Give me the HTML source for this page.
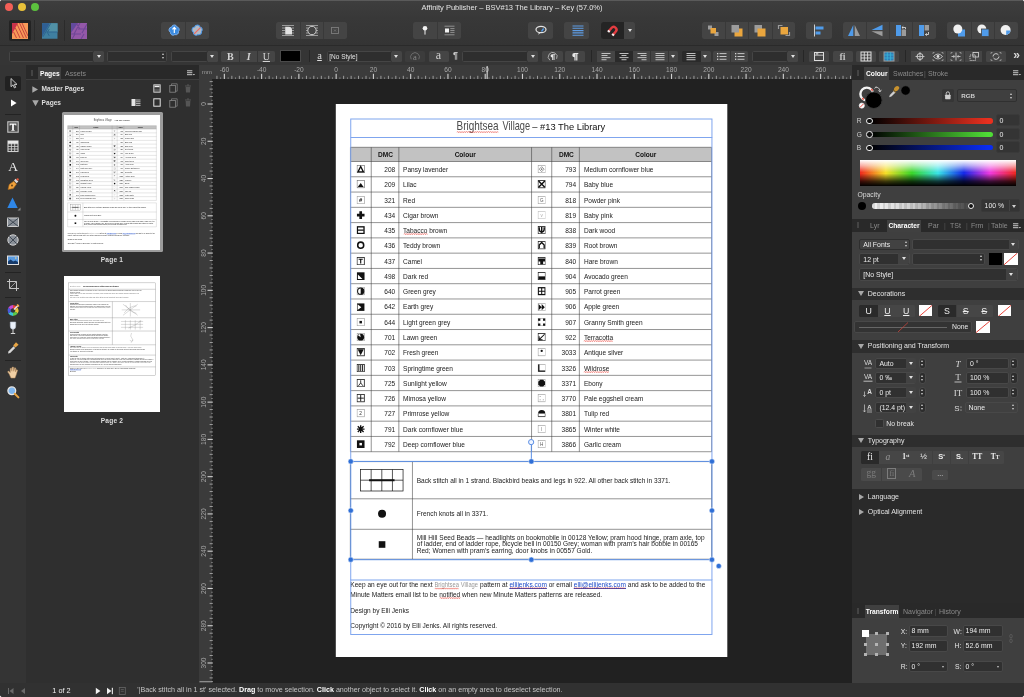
<!DOCTYPE html>
<html lang="en"><head><meta charset="utf-8"><title>Affinity Publisher - BSV#13 The Library - Key</title>
<style>
*{box-sizing:border-box;margin:0;padding:0}
html,body{width:1024px;height:697px;overflow:hidden;background:#fff}
body{font-family:"Liberation Sans",sans-serif;color:#ddd;font-size:7px;position:relative}
.abs{position:absolute}
#app{position:absolute;left:0;top:0;width:1024px;height:697px;overflow:hidden;background:#212121;border-radius:3px;will-change:transform}
#title{position:absolute;left:0;top:0;width:1024px;height:45px;background:linear-gradient(#3e3e3e,#383838 40%,#343434)}
#title .tl{position:absolute;top:3px;width:8px;height:8px;border-radius:50%}
#ttext{position:absolute;left:0;width:1024px;top:3.2px;text-align:center;font-size:7.5px;color:#e4e4e4;letter-spacing:0px}
.grp{position:absolute;top:22px;height:17px;background:#444;border-radius:2.5px;overflow:hidden}
.grp i{position:absolute;top:0;width:1px;height:17px;background:#393939}
.grp svg{position:absolute;top:0}
#ctx{position:absolute;left:0;top:45px;width:1024px;height:20px;background:#353535;border-top:1px solid #2a2a2a}
.fld{position:absolute;top:50.5px;height:11px;background:#2e2e2e;border:0.6px solid #454545;border-radius:1.5px;color:#e2e2e2;font-size:6.5px;line-height:10px;padding-left:3px;white-space:nowrap}
.cb{position:absolute;top:50.5px;height:11px;background:#454545;border-radius:1.5px;color:#d4d4d4;text-align:center;overflow:hidden}
.cb.on{background:#2a2a2a}
.arr{position:absolute;width:0;height:0;border-left:2.5px solid transparent;border-right:2.5px solid transparent;border-top:3.5px solid #e0e0e0}
.sep{position:absolute;width:1px;background:#262626}

.page{position:absolute;width:392px;height:553px;background:#fff;color:#1a1a1a;font-size:6.55px;overflow:hidden}
.page div{position:absolute;white-space:nowrap}
.page .r{text-align:right}
.page .hd{font-weight:bold;text-align:center;color:#111}
.page .sq{text-decoration:none;position:relative}
.page .sq .zz{position:absolute;left:0;bottom:-1.4px;width:100%;height:2px}
.page .lk.sq{text-decoration:underline}
.page.thumb .zz{display:none}
.page .lk{color:#1a48c8;text-decoration:underline;text-decoration-color:#1a48c8}
.page .deco{display:inline-block;font-size:5.8px;color:#999;line-height:0;transform:scaleY(1.2);transform-origin:50% 80%}
.page .tdeco{color:#4a4a4a}
.page .tdeco .zz{bottom:-0.2px;width:76.5%;transform:scaleX(1.307);transform-origin:0 0}
.page .deco .zz{bottom:-3.6px}

#strip{position:absolute;left:0;top:65px;width:26px;height:618px;background:#343434}
#lpanel{position:absolute;left:26px;top:65px;width:172.5px;height:618px;background:#2f2f2f}
.tabbar{position:absolute;height:14.5px;background:#292929;font-size:7px;line-height:17px}
.tabbar .t{position:absolute;top:1.5px;height:13px;line-height:13.6px;color:#8a8a8a;white-space:nowrap}
.tabbar .t.on{background:#404040;color:#fff;font-weight:bold;text-align:center;font-size:6.7px}
.grip{position:absolute;top:5px;width:2px;height:6px;background:#444}
.menu{position:absolute;top:3.5px;width:8px;height:8px}
.tool{position:absolute;left:5px;width:16px;height:16px}
.hsep{position:absolute;left:5px;width:16px;height:1px;background:#232323}
.prow{position:absolute;left:0;width:172px;height:14px;font-size:6.6px;line-height:14px;color:#dedede;font-weight:bold}
.thumbwrap{position:absolute;overflow:hidden;background:#fff}
.plabel{position:absolute;left:26px;width:172px;text-align:center;font-size:6.6px;font-weight:bold;color:#ddd;letter-spacing:0.2px}

.tb2 .t{top:1px;height:12.2px;line-height:12px}
.tb3 .t{top:1.3px;height:14px;line-height:14px}

#rpanel{position:absolute;left:851.5px;top:65px;width:172.5px;height:618px;background:#3f3f3f}
#rpanel div{white-space:nowrap}
.rf{position:absolute;background:#303030;border:0.6px solid #484848;border-radius:2px;color:#ececec;font-size:6.9px;padding-left:3px}
.rb{position:absolute;background:#464646;border-radius:1.5px;color:#eee;overflow:hidden;text-align:center}
.hdr{position:absolute;left:0;width:172.5px;height:12.6px;background:#2e2e2e;color:#e4e4e4;font-size:7px;line-height:12.6px}
.hdr span{position:absolute;left:16.3px}
.tri-d{position:absolute;width:0;height:0;border-left:3.3px solid transparent;border-right:3.3px solid transparent;border-top:5.4px solid #a8a8a8}
.tri-r{position:absolute;width:0;height:0;border-top:3.3px solid transparent;border-bottom:3.3px solid transparent;border-left:5.4px solid #a8a8a8}
.sw{position:absolute;background:#fff;overflow:hidden}
.lbl{position:absolute;color:#d8d8d8;font-size:6.8px}

#status{position:absolute;left:0;top:683px;width:1024px;height:14px;background:#313131;font-size:7.15px;line-height:13px;color:#c4c4c4}
#status b{color:#fff}
</style></head>
<body><svg width="0" height="0" style="position:absolute"><defs><pattern id="zzp" width="2.2" height="2" patternUnits="userSpaceOnUse"><path d="M0,1.7L1.1,0.4L2.2,1.7" fill="none" stroke="#e8392e" stroke-width="0.55"/></pattern></defs></svg><div id="app">
<div id="title"><div class="tl" style="left:5px;background:#f35f57"></div><div class="tl" style="left:18px;background:#e8c13a"></div><div class="tl" style="left:31px;background:#5cc13e"></div><div id="ttext">Affinity Publisher – BSV#13 The Library – Key (57.0%)</div><div class="abs" style="left:9.4px;top:20px;width:21.4px;height:21px;background:#232323;border-radius:2px"></div><svg class="abs" style="left:12px;top:23px" width="16" height="16" viewBox="0 0 16 16"><rect width="16" height="16" fill="#f79a58"/><polygon points="0,0 6,0 0,11" fill="#c8324a"/><g stroke="#c9443f" stroke-width="1"><line x1="5" y1="1" x2="11.5" y2="15"/><line x1="7.5" y1="0" x2="14.5" y2="15"/><line x1="10" y1="0" x2="16" y2="13"/><line x1="3.3" y1="5" x2="8" y2="15"/><line x1="1.6" y1="9" x2="4.5" y2="15"/></g></svg><div class="sep" style="left:34.3px;top:20px;height:21px;background:#2b2b2b"></div><svg class="abs" style="left:42px;top:23px" width="15.5" height="16" viewBox="0 0 16 16"><rect width="16" height="16" fill="#3f7fa0"/><polygon points="0,0 8,0 0,14" fill="#2f5f94"/><polygon points="8,0 16,0 16,9 5,9" fill="#5191a6"/><g stroke="#2d638e" stroke-width="1" fill="none"><path d="M9,0 L1,14 M5,9 L16,9 M7.5,6 L5.5,9.5 L7.5,13"/></g></svg><div class="sep" style="left:64px;top:20px;height:21px;background:#2b2b2b"></div><svg class="abs" style="left:71px;top:23px" width="16" height="16" viewBox="0 0 16 16"><rect width="16" height="16" fill="#9458a8"/><polygon points="0,0 7,0 0,10" fill="#624a9e"/><g stroke="#6f4797" stroke-width="1.1" fill="none"><path d="M5,0 L9,6 M9,0 L3,11 M16,1 L11,10 M0,11 L10,11 M7,6 L16,6 M13,11 L10,16 M4,11 L1,16"/></g></svg><div class="grp " style="left:161.3px;width:47.7px;"><i style="left:23.7px"></i><svg style="left:5.6px;top:1.2px" width="14.6" height="15.5" viewBox="0 0 16 16"><path d="M8,1.6 a3,3 0 0 1 2.9,2.2 a3,3 0 0 1 1.7,5 a3,3 0 0 1 -4,3.4 a3,3 0 0 1 -4.9,-2.6 a3,3 0 0 1 1.4,-5.6 a3,3 0 0 1 2.9,-2.4z"  fill="#3b8be0" stroke="#7fb2ee" stroke-width="1"/><path d="M8,4.5 v6 M6,6.5 l2,-2.2 l2,2.2" stroke="#fff" stroke-width="1.3" fill="none"/></svg><svg style="left:28.6px;top:1.2px" width="14.6" height="15.5" viewBox="0 0 16 16"><path d="M8,1.6 a3,3 0 0 1 2.9,2.2 a3,3 0 0 1 1.7,5 a3,3 0 0 1 -4,3.4 a3,3 0 0 1 -4.9,-2.6 a3,3 0 0 1 1.4,-5.6 a3,3 0 0 1 2.9,-2.4z"  fill="#b2bac6" stroke="#4f9bea" stroke-width="1.1"/><path d="M4.5,11.5 L11.5,4.5" stroke="#ee6a5e" stroke-width="1.3"/></svg></div><div class="grp " style="left:276px;width:70.5px;"><i style="left:23.8px"></i><i style="left:46.8px"></i><svg style="left:4px" width="16" height="17" viewBox="0 0 16 17"><g stroke="#c0c0c0" stroke-width="0.7"><path d="M2,3.5h12M2,6h3M12,6h2M2,8.5h3M12,8.5h2M2,11h3M12,11h2M2,13.5h12" fill="none"/></g><path d="M5.2,4.8h3.6a3.2,3.2 0 0 1 3.2,3.2v4.4h-6.8z" fill="#e2e2e2"/></svg><svg style="left:27.5px" width="16" height="17" viewBox="0 0 16 17"><g stroke="#c0c0c0" stroke-width="0.7" fill="none"><path d="M2,3.5h12M2,6h12M2,8.5h12M2,11h12M2,13.5h12"/><circle cx="8" cy="8.5" r="4.2" fill="#444" stroke="#dcdcdc" stroke-width="0.9"/></g></svg><svg style="left:50.5px" width="16" height="17" viewBox="0 0 16 17"><rect x="4.5" y="5.5" width="7" height="6" fill="none" stroke="#7c7c7c" stroke-width="0.9"/><path d="M7,7.5l2,2M9,7.5l-2,2" stroke="#7c7c7c" stroke-width="0.7"/></svg></div><div class="grp " style="left:413px;width:48.0px;"><i style="left:24.0px"></i><svg style="left:4px" width="16" height="17" viewBox="0 0 16 17"><circle cx="8" cy="6.3" r="2.3" fill="#f2f2f2"/><path d="M8,8v4.6" stroke="#f2f2f2" stroke-width="1"/></svg><svg style="left:28px" width="16" height="17" viewBox="0 0 16 17"><rect x="4" y="6.5" width="4" height="4" fill="#f2f2f2"/><path d="M3.5,4.2h10M9.3,6.6h4.2M9.3,8.5h4.2M9.3,10.4h4.2M3.5,12.8h10" stroke="#b0b0b0" stroke-width="0.7"/></svg></div><div class="grp " style="left:527.5px;width:25.3px;"><svg style="left:5px" width="16" height="17" viewBox="0 0 16 17"><ellipse cx="8" cy="7.5" rx="5" ry="3.2" fill="none" stroke="#e4e4e4" stroke-width="1.2"/><path d="M6,10.3l-0.8,2.4l2.6,-2" fill="#e4e4e4"/><path d="M8.5,9.5l2.2,-3" stroke="#4f9bea" stroke-width="1.4"/></svg></div><div class="grp " style="left:564px;width:25.0px;"><svg style="left:5.6px" width="16" height="17" viewBox="0 0 16 17"><path d="M2.5,4h11M2.5,6.3h11M2.5,8.6h11M2.5,10.9h11M2.5,13.2h11" stroke="#5e9ce4" stroke-width="1.1"/></svg></div><div class="grp " style="left:600.8px;width:34.2px;background:#444"><div class="abs" style="left:0;top:0;width:23.7px;height:17px;background:#242424"></div><svg style="left:4px" width="16" height="17" viewBox="0 0 16 17"><g transform="rotate(40 8 8.5)"><path d="M4,12.5V7.5a4,4 0 0 1 8,0v5h-2.4V7.5a1.6,1.6 0 0 0 -3.2,0v5z" fill="#e23c40"/><rect x="4" y="10.8" width="2.4" height="1.9" fill="#f1f1f1"/><rect x="9.6" y="10.8" width="2.4" height="1.9" fill="#f1f1f1"/></g></svg><div class="arr" style="left:26.8px;top:7px"></div></div><div class="grp " style="left:701.5px;width:93.5px;"><i style="left:23.4px"></i><i style="left:46.8px"></i><i style="left:70.1px"></i><svg style="left:3.7px" width="16" height="17" viewBox="0 0 16 17"><rect x="3" y="3.5" width="4" height="4" fill="#9c9c9c"/><rect x="9.5" y="10" width="4" height="4" fill="#9c9c9c"/><rect x="5.5" y="6" width="5.5" height="5.5" fill="#eaa63e"/></svg><svg style="left:27px" width="16" height="17" viewBox="0 0 16 17"><rect x="5.5" y="6.5" width="8" height="8" fill="#eaa63e"/><rect x="2.5" y="3" width="7.5" height="7.5" fill="#9c9c9c"/></svg><svg style="left:50.5px" width="16" height="17" viewBox="0 0 16 17"><rect x="2.5" y="3" width="7.5" height="7.5" fill="#9c9c9c"/><rect x="5.5" y="6.5" width="8" height="8" fill="#eaa63e"/></svg><svg style="left:74px" width="16" height="17" viewBox="0 0 16 17"><path d="M2.5,7V3.5h4M13.5,10v3.5h-4" stroke="#9c9c9c" stroke-width="1.2" fill="none"/><rect x="4.5" y="5" width="7.5" height="7.5" fill="#eaa63e"/></svg></div><div class="grp " style="left:806px;width:25.8px;"><svg style="left:5px" width="16" height="17" viewBox="0 0 16 17"><path d="M3.5,2.5v12" stroke="#cfcfcf" stroke-width="1"/><rect x="4.5" y="4.5" width="8" height="3" fill="#4f9bea"/><rect x="4.5" y="9.5" width="5" height="3" fill="#4f9bea"/></svg></div><div class="grp " style="left:842.5px;width:93.0px;"><i style="left:23.3px"></i><i style="left:46.5px"></i><i style="left:69.7px"></i><svg style="left:3.6px" width="16" height="17" viewBox="0 0 16 17"><polygon points="7.3,3 7.3,14 2,14" fill="#4f9bea"/><polygon points="8.7,3 8.7,14 14,14" fill="#9c9c9c"/></svg><svg style="left:26.9px" width="16" height="17" viewBox="0 0 16 17"><polygon points="13.5,8 2.5,8 13.5,2.8" fill="#4f9bea"/><polygon points="13.5,9.2 2.5,9.2 13.5,14.2" fill="#9c9c9c"/></svg><svg style="left:50px" width="16" height="17" viewBox="0 0 16 17"><rect x="3" y="3" width="5" height="11" fill="#4f9bea"/><rect x="8.6" y="7.5" width="4.4" height="6.5" fill="#9c9c9c"/><path d="M9,5.5h3.5v1.5M10.3,4.3l-1.4,1.2l1.4,1.2" stroke="#e8e8e8" stroke-width="0.8" fill="none"/></svg><svg style="left:73.4px" width="16" height="17" viewBox="0 0 16 17"><rect x="3" y="3" width="5" height="11" fill="#4f9bea"/><rect x="8.6" y="3" width="4.4" height="5.5" fill="#9c9c9c"/><path d="M12.5,10v2.5h-3M10.8,11.3l-1.4,1.2l1.4,1.2" stroke="#e8e8e8" stroke-width="0.8" fill="none"/></svg></div><div class="grp " style="left:947.3px;width:70.7px;"><i style="left:23.6px"></i><i style="left:47.1px"></i><svg style="left:3.8px" width="16" height="17" viewBox="0 0 16 17"><rect x="7" y="7.5" width="7" height="7" fill="#4f9bea"/><circle cx="6.8" cy="7" r="4.5" fill="#f0f0f0"/></svg><svg style="left:27.4px" width="16" height="17" viewBox="0 0 16 17"><circle cx="6.8" cy="7" r="4.5" fill="#f0f0f0"/><rect x="6.5" y="7" width="7.5" height="7.5" fill="#4f9bea" stroke="#444" stroke-width="0.8"/></svg><svg style="left:51px" width="16" height="17" viewBox="0 0 16 17"><circle cx="7.6" cy="8" r="5" fill="#f0f0f0"/><path d="M8.2,8.6h4.3a5,5 0 0 1 -4.3,4.3z" fill="#4f9bea"/></svg></div></div>
<div id="ctx"></div><div class="fld" style="left:8.8px;width:85.2px;"></div><div class="cb" style="left:94px;width:10.0px;border-radius:0 1.5px 1.5px 0"><div class="arr" style="left:2.5px;top:4px"></div></div><div class="fld" style="left:107.3px;width:59.7px;"></div><div class="abs" style="left:161.5px;top:53px;width:0;height:0;border-left:1.5px solid transparent;border-right:1.5px solid transparent;border-bottom:2px solid #ccc"></div><div class="abs" style="left:161.5px;top:57px;width:0;height:0;border-left:1.5px solid transparent;border-right:1.5px solid transparent;border-top:2px solid #ccc"></div><div class="fld" style="left:171.3px;width:36.7px;"></div><div class="cb" style="left:208px;width:9.5px;border-radius:0 1.5px 1.5px 0"><div class="arr" style="left:2.2px;top:4px"></div></div><div class="cb " style="left:221.3px;width:18.2px;border-radius:1.5px 0 0 1.5px"><span style="font:bold 10px/11px 'Liberation Serif',serif">B</span></div><div class="cb " style="left:240.2px;width:17.0px;border-radius:0"><span style="font:italic bold 10px/11px 'Liberation Serif',serif">I</span></div><div class="cb " style="left:257.9px;width:16.9px;border-radius:0 1.5px 1.5px 0"><span style="font:10px/11px 'Liberation Serif',serif;text-decoration:underline">U</span></div><div class="abs" style="left:280.3px;top:50px;width:21.2px;height:11.5px;background:#000;border:0.5px solid #4a4a4a"></div><div class="sep" style="left:309px;top:50px;height:12px"></div><div class="abs" style="left:316px;top:49.5px;width:7px;font:10.5px/11px 'Liberation Serif',serif;color:#ddd;text-decoration:underline;text-align:center">a</div><div class="fld" style="left:326.8px;width:65.2px;padding-left:1.5px">[No Style]</div><div class="cb" style="left:392px;width:9.8px;border-radius:0 1.5px 1.5px 0"><div class="arr" style="left:2.4px;top:4px"></div></div><div class="cb " style="left:404.8px;width:20.0px;background:#3c3c3c"><svg width="20" height="11" viewBox="0 0 20 11"><path d="M6.2,8.3a4.4,4.4 0 1 1 7.6,0" stroke="#808080" stroke-width="0.7" fill="none"/><text x="10" y="8.6" font-family="Liberation Serif,serif" font-size="8.5" text-anchor="middle" fill="#8a8a8a">a</text></svg></div><div class="cb " style="left:428.5px;width:20.0px;"><span style="font:12px/9.5px 'Liberation Serif',serif">a</span></div><div class="abs" style="left:453px;top:50px;font:bold 9px/11px 'Liberation Sans',sans-serif;color:#ccc">¶</div><div class="fld" style="left:462px;width:66.0px;"></div><div class="cb" style="left:528px;width:10.0px;border-radius:0 1.5px 1.5px 0"><div class="arr" style="left:2.5px;top:4px"></div></div><div class="cb " style="left:541.5px;width:21.5px;"><svg width="21" height="11" viewBox="0 0 21 11"><path d="M8,9.3a4.4,4.4 0 1 1 6.6,-1.5" stroke="#c8c8c8" stroke-width="0.8" fill="none"/><path d="M10.2,3.2h3v0.9h-0.7v5h-0.9v-5h-0.5v5h-0.9v-2.6a1.65,1.65 0 0 1 0,-3.3z" fill="#e6e6e6"/></svg></div><div class="cb " style="left:565px;width:20.0px;"><svg width="20" height="11" viewBox="0 0 20 11"><path d="M9.3,2h4v1.1h-0.9v6.4h-1.2v-6.4h-0.6v6.4h-1.2v-3.3a2.1,2.1 0 0 1 -0.1,-4.2z" fill="#e6e6e6"/></svg></div><div class="sep" style="left:591px;top:50px;height:12px"></div><div class="cb " style="left:597px;width:17.8px;border-radius:0"><svg width="18" height="11" viewBox="0 0 18 11"><rect x="4.5" y="2.0" width="9" height="0.9" fill="#cfcfcf"/><rect x="4.5" y="4.1" width="6" height="0.9" fill="#cfcfcf"/><rect x="4.5" y="6.2" width="9" height="0.9" fill="#cfcfcf"/><rect x="4.5" y="8.3" width="5" height="0.9" fill="#cfcfcf"/></svg></div><div class="cb on" style="left:615.15px;width:17.4px;border-radius:0"><svg width="18" height="11" viewBox="0 0 18 11"><rect x="4.5" y="2.0" width="9" height="0.9" fill="#cfcfcf"/><rect x="6.5" y="4.1" width="5" height="0.9" fill="#cfcfcf"/><rect x="4.5" y="6.2" width="9" height="0.9" fill="#cfcfcf"/><rect x="6.5" y="8.3" width="5" height="0.9" fill="#cfcfcf"/></svg></div><div class="cb " style="left:632.9px;width:17.4px;border-radius:0"><svg width="18" height="11" viewBox="0 0 18 11"><rect x="4.5" y="2.0" width="9" height="0.9" fill="#cfcfcf"/><rect x="7.5" y="4.1" width="6" height="0.9" fill="#cfcfcf"/><rect x="4.5" y="6.2" width="9" height="0.9" fill="#cfcfcf"/><rect x="8.5" y="8.3" width="5" height="0.9" fill="#cfcfcf"/></svg></div><div class="cb " style="left:650.65px;width:17.4px;border-radius:0"><svg width="18" height="11" viewBox="0 0 18 11"><rect x="4.5" y="2.0" width="9" height="0.9" fill="#cfcfcf"/><rect x="4.5" y="4.1" width="9" height="0.9" fill="#cfcfcf"/><rect x="4.5" y="6.2" width="9" height="0.9" fill="#cfcfcf"/><rect x="4.5" y="8.3" width="9" height="0.9" fill="#cfcfcf"/></svg></div><div class="cb" style="left:668.5px;width:9.5px;border-radius:0 1.5px 1.5px 0"><div class="arr" style="left:2.2px;top:4px"></div></div><div class="cb on" style="left:681.5px;width:19.3px;border-radius:1.5px 0 0 1.5px"><svg width="18" height="11" viewBox="0 0 18 11"><rect x="4.5" y="2.0" width="9" height="0.9" fill="#cfcfcf"/><rect x="4.5" y="4.1" width="9" height="0.9" fill="#cfcfcf"/><rect x="4.5" y="6.2" width="9" height="0.9" fill="#cfcfcf"/><rect x="4.5" y="8.3" width="9" height="0.9" fill="#cfcfcf"/></svg></div><div class="cb" style="left:701.3px;width:9.5px;border-radius:0 1.5px 1.5px 0"><div class="arr" style="left:2.2px;top:4px"></div></div><div class="cb " style="left:713px;width:17.3px;border-radius:1.5px 0 0 1.5px"><svg width="17" height="11" viewBox="0 0 17 11"><g fill="#d5d5d5"><rect x="4" y="2" width="1.3" height="1.3"/><rect x="4" y="4.8" width="1.3" height="1.3"/><rect x="4" y="7.6" width="1.3" height="1.3"/><rect x="6.5" y="2.2" width="7" height="0.9"/><rect x="6.5" y="5" width="7" height="0.9"/><rect x="6.5" y="7.8" width="7" height="0.9"/></g></svg></div><div class="cb " style="left:730.8px;width:17.2px;border-radius:0 1.5px 1.5px 0"><svg width="17" height="11" viewBox="0 0 17 11"><g fill="#d5d5d5"><rect x="4" y="2" width="1.3" height="1.3"/><rect x="4" y="4.8" width="1.3" height="1.3"/><rect x="4" y="7.6" width="1.3" height="1.3"/><rect x="6.5" y="2.2" width="7" height="0.9"/><rect x="6.5" y="5" width="7" height="0.9"/><rect x="6.5" y="7.8" width="7" height="0.9"/></g></svg></div><div class="fld" style="left:751.5px;width:36.5px;"></div><div class="cb" style="left:788px;width:10.0px;border-radius:0 1.5px 1.5px 0"><div class="arr" style="left:2.5px;top:4px"></div></div><div class="sep" style="left:803px;top:50px;height:12px"></div><div class="cb " style="left:809px;width:20.0px;"><svg width="20" height="11" viewBox="0 0 20 11"><rect x="5.5" y="1.5" width="9" height="8" fill="none" stroke="#ddd" stroke-width="1"/><path d="M5.5,4.2h9" stroke="#ddd" stroke-width="0.8"/><rect x="6.8" y="2.3" width="2.5" height="1.2" fill="#ddd"/></svg></div><div class="cb " style="left:832.5px;width:20.0px;"><span style="font:bold 10px/11px 'Liberation Serif',serif;color:#c0c0c0">fi</span></div><div class="cb " style="left:855.5px;width:20.5px;"><svg width="20" height="11" viewBox="0 0 20 11"><rect x="5" y="1" width="10" height="9" fill="none" stroke="#ddd" stroke-width="1"/><path d="M8.3,1v9M11.6,1v9M5,4h10M5,7h10" stroke="#ddd" stroke-width="0.9"/></svg></div><div class="cb " style="left:879px;width:20.0px;"><svg width="20" height="11" viewBox="0 0 20 11"><rect x="5" y="1" width="10" height="9" fill="#2d7fb8" stroke="#9a9a9a" stroke-width="1"/><path d="M8.3,1v9M11.6,1v9M5,4h10M5,7h10" stroke="#3bb5d8" stroke-width="0.8"/></svg></div><div class="sep" style="left:905px;top:50px;height:12px"></div><div class="cb " style="left:911px;width:17.7px;border-radius:0"><svg width="18" height="11" viewBox="0 0 18 11"><circle cx="9" cy="5.5" r="3" fill="none" stroke="#ddd" stroke-width="0.9"/><path d="M9,1v9M4.5,5.5h9" stroke="#ddd" stroke-width="0.7"/></svg></div><div class="cb " style="left:929.1px;width:17.3px;border-radius:0"><svg width="18" height="11" viewBox="0 0 18 11"><path d="M4.5,5.5q4.5,-5 9,0q-4.5,5 -9,0z" fill="none" stroke="#ddd" stroke-width="0.8"/><circle cx="9" cy="5.5" r="1.4" fill="#ddd"/><path d="M4,1.5h1.5M4,1.5v1.5M14,1.5h-1.5M14,1.5v1.5M4,9.5h1.5M4,9.5v-1.5M14,9.5h-1.5M14,9.5v-1.5" stroke="#aaa" stroke-width="0.7"/></svg></div><div class="cb " style="left:946.8px;width:17.3px;border-radius:0"><svg width="18" height="11" viewBox="0 0 18 11"><path d="M9,1.5v8M4.5,5.5h3M13.5,5.5h-3M6.5,4.2l1.3,1.3l-1.3,1.3M11.5,4.2l-1.3,1.3l1.3,1.3" stroke="#ddd" stroke-width="0.8" fill="none"/><path d="M4,1.5h1.5M4,1.5v1.5M14,1.5h-1.5M14,1.5v1.5M4,9.5h1.5M4,9.5v-1.5M14,9.5h-1.5M14,9.5v-1.5" stroke="#aaa" stroke-width="0.7"/></svg></div><div class="cb " style="left:964.5px;width:17.3px;border-radius:0"><svg width="18" height="11" viewBox="0 0 18 11"><rect x="8" y="1.5" width="5.5" height="4.5" fill="none" stroke="#ddd" stroke-width="0.8"/><rect x="5" y="4" width="5.5" height="5.5" fill="none" stroke="#ddd" stroke-width="0.8" stroke-dasharray="1.2 0.8"/></svg></div><div class="cb " style="left:985.5px;width:20.0px;"><svg width="20" height="11" viewBox="0 0 20 11"><path d="M7,5.5a3,3 0 0 1 5.5,-1.5M13,5.5a3,3 0 0 1 -5.5,1.5" fill="none" stroke="#ddd" stroke-width="0.9"/><path d="M5,1.5h1.5M5,1.5v1.5M15,1.5h-1.5M15,1.5v1.5M5,9.5h1.5M5,9.5v-1.5M15,9.5h-1.5M15,9.5v-1.5" stroke="#aaa" stroke-width="0.7"/></svg></div><div class="abs" style="left:1013.2px;top:48.6px;font:bold 12px/13px 'Liberation Sans',sans-serif;color:#d8d8d8">»</div>
<div id="strip"><div class="abs" style="left:4.6px;top:10.5px;width:16.6px;height:15px;background:#212121;border-radius:2px"></div><svg class="tool" style="top:10.2px" width="16" height="16" viewBox="0 0 16 16"><path d="M6,3.5v8.2l2,-1.8l1.4,3l1.3,-0.6l-1.4,-2.9h2.7z" fill="#2a2a2a" stroke="#d8d8d8" stroke-width="0.9" stroke-linejoin="round"/></svg><svg class="tool" style="top:29.5px" width="16" height="16" viewBox="0 0 16 16"><path d="M6,4.6v7l5.6,-3.5z" fill="#fff"/></svg><div class="hsep" style="top:49px"></div><svg class="tool" style="top:53.8px" width="16" height="16" viewBox="0 0 16 16"><rect x="2.8" y="2.8" width="10.4" height="10.4" fill="#4a4a4a" stroke="#c4c4c4" stroke-width="1.1"/><path d="M4.6,4.6h6.8v2h-0.8l-0.3,-0.9h-1.4v5.2l0.9,0.3v0.6h-3.6v-0.6l0.9,-0.3v-5.2h-1.4l-0.3,0.9h-0.8z" fill="#f6f6f6"/></svg><svg class="tool" style="top:73.0px" width="16" height="16" viewBox="0 0 16 16"><rect x="3" y="3" width="10" height="10.5" fill="none" stroke="#d0d0d0" stroke-width="1.1"/><path d="M3,5.8h10M3,8.4h10M3,11h10M6.4,3v10.5M9.7,3v10.5" stroke="#d0d0d0" stroke-width="0.9"/><rect x="3" y="3" width="10" height="2.6" fill="#e8e8e8"/></svg><svg class="tool" style="top:92.6px" width="16" height="16" viewBox="0 0 16 16"><text x="8" y="13" font-family="Liberation Serif,serif" font-size="13.5" text-anchor="middle" fill="#ececec">A</text></svg><svg class="tool" style="top:111.0px" width="16" height="16" viewBox="0 0 16 16"><path d="M3,13.5l1.2,-5l4.5,-3.2l2.8,2.8l-3.2,4.5z" fill="#f0a23c" stroke="#a86518" stroke-width="0.6"/><path d="M9,4.6l1.6,-1.8l2.8,2.8l-1.8,1.6z" fill="#d9d9d9"/><circle cx="7" cy="9.5" r="0.9" fill="#5a3a10"/><circle cx="12.6" cy="3.4" r="1.2" fill="#e0563a"/></svg><svg class="tool" style="top:129.6px" width="16" height="16" viewBox="0 0 16 16"><path d="M7.5,2.5l5.2,10.5h-10.4z" fill="#2f87e8"/><path d="M15.5,12.5v3h-3z" fill="#888"/></svg><svg class="tool" style="top:148.5px" width="16" height="16" viewBox="0 0 16 16"><rect x="2.5" y="4" width="11" height="8.5" fill="#8a9098" stroke="#cfcfcf" stroke-width="1"/><path d="M2.5,4l11,8.5M13.5,4l-11,8.5" stroke="#2e3844" stroke-width="0.8"/></svg><svg class="tool" style="top:167.0px" width="16" height="16" viewBox="0 0 16 16"><circle cx="8" cy="8" r="5.2" fill="#8a9098" stroke="#cfcfcf" stroke-width="1"/><path d="M4.3,4.3l7.4,7.4M11.7,4.3l-7.4,7.4" stroke="#2e3844" stroke-width="0.8"/></svg><svg class="tool" style="top:186.5px" width="16" height="16" viewBox="0 0 16 16"><rect x="2.5" y="4" width="11" height="8.5" fill="#5a9be0" stroke="#e0e0e0" stroke-width="1"/><path d="M3,12v-2.6l2.6,-1.8l2.6,2l2.2,-1.2l2.6,1.6v2z" fill="#163a6a"/><circle cx="10.8" cy="6" r="0.8" fill="#f2d88a"/></svg><div class="hsep" style="top:206.5px"></div><svg class="tool" style="top:211.5px" width="16" height="16" viewBox="0 0 16 16"><path d="M4.5,2v9.5h9.5M2,4.5h9.5v9.5" stroke="#c4c4c4" stroke-width="1" fill="none"/><path d="M4.5,11.5l7,-7" stroke="#c4c4c4" stroke-width="0.7"/></svg><div class="hsep" style="top:232.4px"></div><svg class="tool" style="top:236.7px" width="16" height="16" viewBox="0 0 16 16"><path d="M8,8.5L8.00,3.00A5.5,5.5 0 0 1 12.77,5.75z" fill="#e8423c"/><path d="M8,8.5L12.77,5.75A5.5,5.5 0 0 1 12.76,11.25z" fill="#e8c63c"/><path d="M8,8.5L12.76,11.25A5.5,5.5 0 0 1 8.00,14.00z" fill="#5cc84a"/><path d="M8,8.5L8.00,14.00A5.5,5.5 0 0 1 3.23,11.25z" fill="#3cc2d8"/><path d="M8,8.5L3.23,11.25A5.5,5.5 0 0 1 3.24,5.75z" fill="#4a5ae0"/><path d="M8,8.5L3.24,5.75A5.5,5.5 0 0 1 8.00,3.00z" fill="#c64ad0"/><circle cx="8" cy="8.5" r="2.2" fill="#353535"/><path d="M9,7.5l4.5,-4.5" stroke="#e8e8e8" stroke-width="1.4"/><path d="M12,2.5l2,2" stroke="#f0a23c" stroke-width="1.6"/></svg><svg class="tool" style="top:255.4px" width="16" height="16" viewBox="0 0 16 16"><path d="M5.3,2h5.4v4.2a2.7,3 0 0 1 -5.4,0z" fill="#eaf0fa" stroke="#b8c2d2" stroke-width="0.6"/><path d="M8,9v4M5.8,13.5h4.4" stroke="#d6d6d6" stroke-width="1"/></svg><svg class="tool" style="top:274.6px" width="16" height="16" viewBox="0 0 16 16"><path d="M3,13.5l0.6,-2.2l5,-5l1.6,1.6l-5,5z" fill="#d8d8d8"/><path d="M8.2,5.4l2.8,-3.2l2.6,2.6l-3.2,2.8z" fill="#e8a544"/></svg><div class="hsep" style="top:295px"></div><svg class="tool" style="top:299.8px" width="16" height="16" viewBox="0 0 16 16"><path d="M4.2,9l-1.6,-2.2l1,-0.8l1.6,1.6v-4.2l1.2,-0.3l0.5,3.2l0.3,-4.2l1.3,0l0.3,4.2l0.8,-3.6l1.2,0.3l-0.4,4l1.2,-2.4l1,0.6l-1.4,4.6l-1.2,3.2h-4z" fill="#f0cfa4" stroke="#b98d5c" stroke-width="0.5"/></svg><svg class="tool" style="top:318.5px" width="16" height="16" viewBox="0 0 16 16"><circle cx="6.8" cy="6.8" r="3.9" fill="#7fb6ee" stroke="#e6e6e6" stroke-width="1.3"/><path d="M9.8,9.8l3.6,3.6" stroke="#e8a544" stroke-width="2" stroke-linecap="round"/></svg></div><div id="lpanel"><div class="tabbar" style="left:0;top:0;width:172.5px"><div class="grip" style="left:5px"></div><div class="t on" style="left:12.3px;width:23px">Pages</div><div class="t" style="left:39px">Assets</div><svg class="menu" style="left:160.5px" width="9" height="8" viewBox="0 0 9 8"><path d="M0,1.5h6M0,3.7h6M0,5.9h6" stroke="#ddd" stroke-width="1"/><path d="M6.6,5l1.2,1.6l1.2,-1.6z" fill="#ddd"/></svg><div class="abs" style="left:0;bottom:-0.5px;width:100%;height:1px;background:#3e3e3e"></div></div><div class="prow" style="top:17.1px"><svg class="abs" style="left:5.5px;top:4px" width="6.5" height="7" viewBox="0 0 6 6"><path d="M0.3,0v6l5.4,-3z" fill="#a8a8a8"/></svg><span class="abs" style="left:15.6px">Master Pages</span><svg class="abs" style="left:127.3px;top:1.5px" width="8" height="9" viewBox="0 0 8 9"><rect x="0.8" y="0.8" width="6.4" height="7.4" fill="#5a5a5a" stroke="#d4d4d4" stroke-width="0.9"/><path d="M1.6,2.4h4.8" stroke="#f4f4f4" stroke-width="1.3"/><path d="M1.6,4.6h4.8" stroke="#2a2a2a" stroke-width="0.7"/></svg><svg class="abs" style="left:142.5px;top:1px" width="9" height="10" viewBox="0 0 9 10"><path d="M2.5,2.5v-1.7h5.7v7.4h-1.7" fill="none" stroke="#888" stroke-width="0.7"/><rect x="0.8" y="2.5" width="5.7" height="6.7" fill="none" stroke="#888" stroke-width="0.8"/></svg><svg class="abs" style="left:157.5px;top:1.5px" width="8" height="9" viewBox="0 0 8 9"><path d="M1,2h6M3,1h2" stroke="#5a5a5a" stroke-width="0.9"/><path d="M1.6,3h4.8l-0.4,5.5h-4z" fill="#555"/></svg></div><div class="prow" style="top:30.7px"><svg class="abs" style="left:5.5px;top:4.5px" width="7" height="6.5" viewBox="0 0 6 6"><path d="M0,0.3h6l-3,5.4z" fill="#a8a8a8"/></svg><span class="abs" style="left:15.6px">Pages</span><svg class="abs" style="left:105px;top:2.5px" width="10" height="9" viewBox="0 0 10 9"><rect x="0.5" y="1" width="4" height="7" fill="#e6e6e6"/><path d="M5,2h4.5M5,3.8h4.5M5,5.6h4.5M5,7.4h4.5" stroke="#ddd" stroke-width="0.8"/></svg><svg class="abs" style="left:127.3px;top:2.5px" width="8" height="9" viewBox="0 0 8 9"><rect x="0.8" y="0.8" width="6.4" height="7.4" fill="none" stroke="#e4e4e4" stroke-width="1"/></svg><svg class="abs" style="left:142.5px;top:2px" width="9" height="10" viewBox="0 0 9 10"><path d="M2.5,2.5v-1.7h5.7v7.4h-1.7" fill="none" stroke="#888" stroke-width="0.7"/><rect x="0.8" y="2.5" width="5.7" height="6.7" fill="none" stroke="#888" stroke-width="0.8"/></svg><svg class="abs" style="left:157.5px;top:2.5px" width="8" height="9" viewBox="0 0 8 9"><path d="M1,2h6M3,1h2" stroke="#5a5a5a" stroke-width="0.9"/><path d="M1.6,3h4.8l-0.4,5.5h-4z" fill="#555"/></svg></div><div class="abs" style="left:35.7px;top:47.2px;width:100.9px;height:140px;background:#9c9c9c;border-radius:1.5px"></div><div class="thumbwrap" style="left:37.7px;top:49.5px;width:96.3px;height:135.5px"><div style="transform:scale(0.24566);transform-origin:0 0;width:392px;height:553px;position:absolute;left:0;top:0"><div class="page thumb"><div class="tdeco" style="left:121.05px;top:13.5px;width:54.92px;line-height:16px;font-size:13px;transform:scaleX(0.765);transform-origin:0 0"><span class="sq">Brightsea<svg class="zz" height="2"><rect width="100%" height="2" fill="url(#zzp)"/></svg></span></div><div class="tdeco" style="left:167.45px;top:13.5px;line-height:16px;font-size:13px;transform:scaleX(0.709);transform-origin:0 0">Village</div><div style="left:196.65px;top:15.2px;line-height:16px;font-size:9.36px;color:#111">– #13 The Library</div><svg class="abs" style="position:absolute;left:0;top:0" width="392" height="553" viewBox="0 0 392 553"><rect x="14.8" y="43.3" width="361.3" height="14.2" fill="#c2c2c2"/><g stroke="#3a3a3a" stroke-width="0.55"><line x1="14.9" y1="43.3" x2="14.9" y2="347.73"/><line x1="35.7" y1="43.3" x2="35.7" y2="347.73"/><line x1="63.3" y1="43.3" x2="63.3" y2="347.73"/><line x1="196.0" y1="43.3" x2="196.0" y2="347.73"/><line x1="216.2" y1="43.3" x2="216.2" y2="347.73"/><line x1="243.8" y1="43.3" x2="243.8" y2="347.73"/><line x1="376.0" y1="43.3" x2="376.0" y2="347.73"/><line x1="14.8" y1="43.3" x2="376.1" y2="43.3"/><line x1="14.8" y1="57.50" x2="376.1" y2="57.50"/><line x1="14.8" y1="72.78" x2="376.1" y2="72.78"/><line x1="14.8" y1="88.05" x2="376.1" y2="88.05"/><line x1="14.8" y1="103.33" x2="376.1" y2="103.33"/><line x1="14.8" y1="118.60" x2="376.1" y2="118.60"/><line x1="14.8" y1="133.88" x2="376.1" y2="133.88"/><line x1="14.8" y1="149.15" x2="376.1" y2="149.15"/><line x1="14.8" y1="164.43" x2="376.1" y2="164.43"/><line x1="14.8" y1="179.70" x2="376.1" y2="179.70"/><line x1="14.8" y1="194.97" x2="376.1" y2="194.97"/><line x1="14.8" y1="210.25" x2="376.1" y2="210.25"/><line x1="14.8" y1="225.53" x2="376.1" y2="225.53"/><line x1="14.8" y1="240.80" x2="376.1" y2="240.80"/><line x1="14.8" y1="256.08" x2="376.1" y2="256.08"/><line x1="14.8" y1="271.35" x2="376.1" y2="271.35"/><line x1="14.8" y1="286.62" x2="376.1" y2="286.62"/><line x1="14.8" y1="301.90" x2="376.1" y2="301.90"/><line x1="14.8" y1="317.18" x2="376.1" y2="317.18"/><line x1="14.8" y1="332.45" x2="376.1" y2="332.45"/><line x1="14.8" y1="347.73" x2="376.1" y2="347.73"/><line x1="14.8" y1="357.6" x2="376.1" y2="357.6"/><line x1="14.8" y1="394.8" x2="376.1" y2="394.8"/><line x1="14.8" y1="425.3" x2="376.1" y2="425.3"/><line x1="14.8" y1="455.2" x2="376.1" y2="455.2"/><line x1="14.8" y1="357.6" x2="14.8" y2="455.2"/><line x1="76.9" y1="357.6" x2="76.9" y2="455.2"/><line x1="376.1" y1="357.6" x2="376.1" y2="455.2"/></g><g stroke="#111" stroke-width="0.7" fill="none"><rect x="25" y="365.5" width="42.5" height="21.5"/><path d="M35.6,365.5v21.5M46.25,365.5v21.5M56.9,365.5v21.5M25,376.2h42.5"/></g><path d="M33.5,376.2h25.5" stroke="#111" stroke-width="2"/><circle cx="46.5" cy="409.7" r="4" fill="#111"/><rect x="43.2" y="437.2" width="6.6" height="6.6" fill="#111"/></svg><div class="hd" style="left:36.3px;width:27.3px;top:44.099999999999994px;line-height:14.2px">DMC</div><div class="hd" style="left:63.6px;width:132.1px;top:44.099999999999994px;line-height:14.2px">Colour</div><div class="hd" style="left:217.2px;width:27.3px;top:44.099999999999994px;line-height:14.2px">DMC</div><div class="hd" style="left:244.5px;width:131.6px;top:44.099999999999994px;line-height:14.2px">Colour</div><svg style="position:absolute;left:21.40px;top:61.09px" width="8.3" height="8.3" viewBox="0 0 8 8"><rect x="0.5" y="0.5" width="7" height="7" fill="#fff" stroke="#666" stroke-width="0.6"/><path d="M4,1.5L6.6,6.6H1.4z" fill="#fff" stroke="#111" stroke-width="1.3"/></svg><div class="r" style="left:36.3px;width:23.4px;top:58.00px;line-height:15.275px">208</div><div style="left:67.5px;top:58.00px;line-height:15.275px">Pansy lavender</div><svg style="position:absolute;left:201.80px;top:61.09px" width="8.3" height="8.3" viewBox="0 0 8 8"><rect x="0.5" y="0.5" width="7" height="7" fill="#fff" stroke="#999" stroke-width="0.6"/><path d="M4,1.6L6.4,4L4,6.4L1.6,4z" fill="none" stroke="#777" stroke-width="0.7"/><circle cx="4" cy="4" r="0.8" fill="#777"/></svg><div class="r" style="left:217.2px;width:23.4px;top:58.00px;line-height:15.275px">793</div><div style="left:248.4px;top:58.00px;line-height:15.275px">Medium cornflower blue</div><svg style="position:absolute;left:21.40px;top:76.36px" width="8.3" height="8.3" viewBox="0 0 8 8"><rect x="0.5" y="0.5" width="7" height="7" fill="#fff" stroke="#666" stroke-width="0.6"/><path d="M4,3L6.8,6.8H1.2z" fill="#111"/></svg><div class="r" style="left:36.3px;width:23.4px;top:73.28px;line-height:15.275px">209</div><div style="left:67.5px;top:73.28px;line-height:15.275px">Lilac</div><svg style="position:absolute;left:201.80px;top:76.36px" width="8.3" height="8.3" viewBox="0 0 8 8"><rect x="0.5" y="0.5" width="7" height="7" fill="#fff" stroke="#222" stroke-width="0.8"/><path d="M1,1l6,6M7,1l-6,6" stroke="#111" stroke-width="1.4"/></svg><div class="r" style="left:217.2px;width:23.4px;top:73.28px;line-height:15.275px">794</div><div style="left:248.4px;top:73.28px;line-height:15.275px">Baby blue</div><svg style="position:absolute;left:21.40px;top:91.64px" width="8.3" height="8.3" viewBox="0 0 8 8"><rect x="0.5" y="0.5" width="7" height="7" fill="#fff" stroke="#999" stroke-width="0.6"/><text x="4" y="6" font-family="Liberation Sans,sans-serif" font-size="5.6" font-weight="bold" text-anchor="middle" fill="#111">#</text></svg><div class="r" style="left:36.3px;width:23.4px;top:88.55px;line-height:15.275px">321</div><div style="left:67.5px;top:88.55px;line-height:15.275px">Red</div><svg style="position:absolute;left:201.80px;top:91.64px" width="8.3" height="8.3" viewBox="0 0 8 8"><rect x="0.5" y="0.5" width="7" height="7" fill="#fff" stroke="#999" stroke-width="0.6"/><text x="4" y="6" font-family="Liberation Sans,sans-serif" font-size="4.4" font-weight="normal" text-anchor="middle" fill="#555">G</text></svg><div class="r" style="left:217.2px;width:23.4px;top:88.55px;line-height:15.275px">818</div><div style="left:248.4px;top:88.55px;line-height:15.275px">Powder pink</div><svg style="position:absolute;left:21.40px;top:106.91px" width="8.3" height="8.3" viewBox="0 0 8 8"><path d="M2.7,0.3h2.6v2.4h2.4v2.6h-2.4v2.4h-2.6v-2.4h-2.4v-2.6h2.4z" fill="#111"/></svg><div class="r" style="left:36.3px;width:23.4px;top:103.83px;line-height:15.275px">434</div><div style="left:67.5px;top:103.83px;line-height:15.275px">Cigar brown</div><svg style="position:absolute;left:201.80px;top:106.91px" width="8.3" height="8.3" viewBox="0 0 8 8"><rect x="0.5" y="0.5" width="7" height="7" fill="#fff" stroke="#bbb" stroke-width="0.6"/><text x="4" y="6" font-family="Liberation Sans,sans-serif" font-size="4.4" font-weight="normal" text-anchor="middle" fill="#aaa">v</text></svg><div class="r" style="left:217.2px;width:23.4px;top:103.83px;line-height:15.275px">819</div><div style="left:248.4px;top:103.83px;line-height:15.275px">Baby pink</div><svg style="position:absolute;left:21.40px;top:122.19px" width="8.3" height="8.3" viewBox="0 0 8 8"><rect x="0.8" y="0.8" width="6.4" height="6.4" fill="#fff" stroke="#111" stroke-width="1.3"/><path d="M1,4h6" stroke="#111" stroke-width="1.2"/></svg><div class="r" style="left:36.3px;width:23.4px;top:119.10px;line-height:15.275px">435</div><div style="left:67.5px;top:119.10px;line-height:15.275px"><span class="sq">Tabacco<svg class="zz" height="2"><rect width="100%" height="2" fill="url(#zzp)"/></svg></span> brown</div><svg style="position:absolute;left:201.80px;top:122.19px" width="8.3" height="8.3" viewBox="0 0 8 8"><rect x="0.5" y="0.5" width="7" height="7" fill="#fff" stroke="#222" stroke-width="0.8"/><path d="M1.6,1.2v2a2.4,2.6 0 0 0 4.8,0v-2M4,1v6" stroke="#111" stroke-width="1.4" fill="none"/></svg><div class="r" style="left:217.2px;width:23.4px;top:119.10px;line-height:15.275px">838</div><div style="left:248.4px;top:119.10px;line-height:15.275px">Dark wood</div><svg style="position:absolute;left:21.40px;top:137.46px" width="8.3" height="8.3" viewBox="0 0 8 8"><circle cx="4" cy="4" r="2.9" fill="#fff" stroke="#111" stroke-width="1.5"/></svg><div class="r" style="left:36.3px;width:23.4px;top:134.38px;line-height:15.275px">436</div><div style="left:67.5px;top:134.38px;line-height:15.275px">Teddy brown</div><svg style="position:absolute;left:201.80px;top:137.46px" width="8.3" height="8.3" viewBox="0 0 8 8"><rect x="0.5" y="0.5" width="7" height="7" fill="#fff" stroke="#222" stroke-width="0.8"/><path d="M1.6,7V3.8L4,1.4L6.4,3.8V7" fill="#fff" stroke="#111" stroke-width="1.3"/></svg><div class="r" style="left:217.2px;width:23.4px;top:134.38px;line-height:15.275px">839</div><div style="left:248.4px;top:134.38px;line-height:15.275px">Root brown</div><svg style="position:absolute;left:21.40px;top:152.74px" width="8.3" height="8.3" viewBox="0 0 8 8"><rect x="0.5" y="0.5" width="7" height="7" fill="#fff" stroke="#222" stroke-width="0.8"/><path d="M2,2.2h4M4,2.2v4" stroke="#111" stroke-width="1.1"/></svg><div class="r" style="left:36.3px;width:23.4px;top:149.65px;line-height:15.275px">437</div><div style="left:67.5px;top:149.65px;line-height:15.275px">Camel</div><svg style="position:absolute;left:201.80px;top:152.74px" width="8.3" height="8.3" viewBox="0 0 8 8"><rect x="0.5" y="0.5" width="7" height="7" fill="#fff" stroke="#222" stroke-width="0.8"/><path d="M0.8,1.4h6.4v3h-1.8v2.6h-2.8v-2.6h-1.8z" fill="#111"/></svg><div class="r" style="left:217.2px;width:23.4px;top:149.65px;line-height:15.275px">840</div><div style="left:248.4px;top:149.65px;line-height:15.275px">Hare brown</div><svg style="position:absolute;left:21.40px;top:168.01px" width="8.3" height="8.3" viewBox="0 0 8 8"><rect x="0.3" y="0.3" width="7.4" height="7.4" fill="#111"/><path d="M1.3,6.7v-4.4l4.4,4.4z" fill="#fff"/></svg><div class="r" style="left:36.3px;width:23.4px;top:164.93px;line-height:15.275px">498</div><div style="left:67.5px;top:164.93px;line-height:15.275px">Dark red</div><svg style="position:absolute;left:201.80px;top:168.01px" width="8.3" height="8.3" viewBox="0 0 8 8"><rect x="0.5" y="0.5" width="7" height="7" fill="#fff" stroke="#222" stroke-width="0.8"/><rect x="0.8" y="4.2" width="6.4" height="3" fill="#111"/></svg><div class="r" style="left:217.2px;width:23.4px;top:164.93px;line-height:15.275px">904</div><div style="left:248.4px;top:164.93px;line-height:15.275px">Avocado green</div><svg style="position:absolute;left:21.40px;top:183.29px" width="8.3" height="8.3" viewBox="0 0 8 8"><rect x="0.5" y="0.5" width="7" height="7" fill="#fff" stroke="#999" stroke-width="0.6"/><circle cx="4" cy="4" r="3" fill="#fff" stroke="#111" stroke-width="1"/><path d="M4,1a3,3 0 0 1 0,6z" fill="#111"/></svg><div class="r" style="left:36.3px;width:23.4px;top:180.20px;line-height:15.275px">640</div><div style="left:67.5px;top:180.20px;line-height:15.275px">Green grey</div><svg style="position:absolute;left:201.80px;top:183.29px" width="8.3" height="8.3" viewBox="0 0 8 8"><rect x="0.7" y="0.7" width="6.6" height="6.6" fill="#fff" stroke="#111" stroke-width="1.2"/><path d="M4,0.7v6.6M0.7,4h6.6" stroke="#111" stroke-width="1"/></svg><div class="r" style="left:217.2px;width:23.4px;top:180.20px;line-height:15.275px">905</div><div style="left:248.4px;top:180.20px;line-height:15.275px">Parrot green</div><svg style="position:absolute;left:21.40px;top:198.56px" width="8.3" height="8.3" viewBox="0 0 8 8"><rect x="0.4" y="0.4" width="7.2" height="7.2" fill="#111"/><path d="M1,1.2L4.6,4L1,6.8z" fill="#fff"/></svg><div class="r" style="left:36.3px;width:23.4px;top:195.47px;line-height:15.275px">642</div><div style="left:67.5px;top:195.47px;line-height:15.275px">Earth grey</div><svg style="position:absolute;left:201.80px;top:198.56px" width="8.3" height="8.3" viewBox="0 0 8 8"><rect x="0.5" y="0.5" width="7" height="7" fill="#fff" stroke="#999" stroke-width="0.6"/><path d="M1,1L4,4L1,7zM4,1L7,4L4,7z" fill="#111"/></svg><div class="r" style="left:217.2px;width:23.4px;top:195.47px;line-height:15.275px">906</div><div style="left:248.4px;top:195.47px;line-height:15.275px">Apple green</div><svg style="position:absolute;left:21.40px;top:213.84px" width="8.3" height="8.3" viewBox="0 0 8 8"><rect x="0.5" y="0.5" width="7" height="7" fill="#fff" stroke="#999" stroke-width="0.6"/><rect x="2.8" y="2.8" width="2.4" height="2.4" fill="#111"/></svg><div class="r" style="left:36.3px;width:23.4px;top:210.75px;line-height:15.275px">644</div><div style="left:67.5px;top:210.75px;line-height:15.275px">Light green grey</div><svg style="position:absolute;left:201.80px;top:213.84px" width="8.3" height="8.3" viewBox="0 0 8 8"><rect x="0.5" y="0.5" width="7" height="7" fill="#fff" stroke="#999" stroke-width="0.6"/><g fill="#111"><rect x="0.5" y="0.5" width="2.2" height="2.2"/><rect x="5.3" y="0.5" width="2.2" height="2.2"/><rect x="0.5" y="5.3" width="2.2" height="2.2"/><rect x="5.3" y="5.3" width="2.2" height="2.2"/></g></svg><div class="r" style="left:217.2px;width:23.4px;top:210.75px;line-height:15.275px">907</div><div style="left:248.4px;top:210.75px;line-height:15.275px">Granny Smith green</div><svg style="position:absolute;left:21.40px;top:229.11px" width="8.3" height="8.3" viewBox="0 0 8 8"><rect x="0.5" y="0.5" width="7" height="7" fill="#fff" stroke="#999" stroke-width="0.6"/><circle cx="4" cy="4" r="3.3" fill="#111"/><path d="M4,4L1.4,2.2A3.3,3.3 0 0 1 3.4,0.9z" fill="#fff"/></svg><div class="r" style="left:36.3px;width:23.4px;top:226.03px;line-height:15.275px">701</div><div style="left:67.5px;top:226.03px;line-height:15.275px">Lawn green</div><svg style="position:absolute;left:201.80px;top:229.11px" width="8.3" height="8.3" viewBox="0 0 8 8"><rect x="0.5" y="0.5" width="7" height="7" fill="#fff" stroke="#222" stroke-width="0.8"/><path d="M6.8,1.2L1.5,6.5M1.5,3.2v3.3h3.3" stroke="#111" stroke-width="1" fill="none"/></svg><div class="r" style="left:217.2px;width:23.4px;top:226.03px;line-height:15.275px">922</div><div style="left:248.4px;top:226.03px;line-height:15.275px"><span class="sq">Terracotta<svg class="zz" height="2"><rect width="100%" height="2" fill="url(#zzp)"/></svg></span></div><svg style="position:absolute;left:21.40px;top:244.39px" width="8.3" height="8.3" viewBox="0 0 8 8"><rect x="0.5" y="0.5" width="7" height="7" fill="#fff" stroke="#222" stroke-width="0.8"/><path d="M1,1.2h6L4,7z" fill="#111"/></svg><div class="r" style="left:36.3px;width:23.4px;top:241.30px;line-height:15.275px">702</div><div style="left:67.5px;top:241.30px;line-height:15.275px">Fresh green</div><svg style="position:absolute;left:201.80px;top:244.39px" width="8.3" height="8.3" viewBox="0 0 8 8"><rect x="0.5" y="0.5" width="7" height="7" fill="#fff" stroke="#999" stroke-width="0.6"/><circle cx="4" cy="2.8" r="1.1" fill="#111"/></svg><div class="r" style="left:217.2px;width:23.4px;top:241.30px;line-height:15.275px">3033</div><div style="left:248.4px;top:241.30px;line-height:15.275px">Antique silver</div><svg style="position:absolute;left:21.40px;top:259.66px" width="8.3" height="8.3" viewBox="0 0 8 8"><rect x="0.5" y="0.5" width="7" height="7" fill="#fff" stroke="#222" stroke-width="0.8"/><path d="M2.2,1v6M4,1v6M5.8,1v6" stroke="#111" stroke-width="0.9"/></svg><div class="r" style="left:36.3px;width:23.4px;top:256.58px;line-height:15.275px">703</div><div style="left:67.5px;top:256.58px;line-height:15.275px">Springtime green</div><svg style="position:absolute;left:201.80px;top:259.66px" width="8.3" height="8.3" viewBox="0 0 8 8"><rect x="0.5" y="0.5" width="7" height="7" fill="#fff" stroke="#999" stroke-width="0.6"/><path d="M1.2,0.6v6.2h6.2" stroke="#111" stroke-width="1.3" fill="none"/></svg><div class="r" style="left:217.2px;width:23.4px;top:256.58px;line-height:15.275px">3326</div><div style="left:248.4px;top:256.58px;line-height:15.275px"><span class="sq">Wildrose<svg class="zz" height="2"><rect width="100%" height="2" fill="url(#zzp)"/></svg></span></div><svg style="position:absolute;left:21.40px;top:274.94px" width="8.3" height="8.3" viewBox="0 0 8 8"><rect x="0.5" y="0.5" width="7" height="7" fill="#fff" stroke="#222" stroke-width="0.8"/><path d="M4,1.2v2.6M4,3.8L1.8,6.6M4,3.8L6.2,6.6" stroke="#111" stroke-width="0.8" fill="none"/></svg><div class="r" style="left:36.3px;width:23.4px;top:271.85px;line-height:15.275px">725</div><div style="left:67.5px;top:271.85px;line-height:15.275px">Sunlight yellow</div><svg style="position:absolute;left:201.80px;top:274.94px" width="8.3" height="8.3" viewBox="0 0 8 8"><rect x="0.5" y="0.5" width="7" height="7" fill="#fff" stroke="#999" stroke-width="0.6"/><path d="M2.6,0.7h2.8l1.9,1.9v2.8l-1.9,1.9h-2.8l-1.9,-1.9v-2.8z" fill="#111"/></svg><div class="r" style="left:217.2px;width:23.4px;top:271.85px;line-height:15.275px">3371</div><div style="left:248.4px;top:271.85px;line-height:15.275px">Ebony</div><svg style="position:absolute;left:21.40px;top:290.21px" width="8.3" height="8.3" viewBox="0 0 8 8"><rect x="0.5" y="0.5" width="7" height="7" fill="#fff" stroke="#222" stroke-width="0.8"/><path d="M4,1v6M1,4h6" stroke="#111" stroke-width="0.9"/></svg><div class="r" style="left:36.3px;width:23.4px;top:287.12px;line-height:15.275px">726</div><div style="left:67.5px;top:287.12px;line-height:15.275px">Mimosa yellow</div><svg style="position:absolute;left:201.80px;top:290.21px" width="8.3" height="8.3" viewBox="0 0 8 8"><rect x="0.5" y="0.5" width="7" height="7" fill="#fff" stroke="#999" stroke-width="0.6"/><g fill="#888"><circle cx="2.5" cy="2.5" r="0.5"/><circle cx="5.5" cy="5.5" r="0.5"/><circle cx="2.5" cy="5.5" r="0.5"/></g></svg><div class="r" style="left:217.2px;width:23.4px;top:287.12px;line-height:15.275px">3770</div><div style="left:248.4px;top:287.12px;line-height:15.275px">Pale eggshell cream</div><svg style="position:absolute;left:21.40px;top:305.49px" width="8.3" height="8.3" viewBox="0 0 8 8"><rect x="0.5" y="0.5" width="7" height="7" fill="#fff" stroke="#999" stroke-width="0.6"/><text x="4" y="6" font-family="Liberation Sans,sans-serif" font-size="4.6" font-weight="normal" text-anchor="middle" fill="#333">2</text></svg><div class="r" style="left:36.3px;width:23.4px;top:302.40px;line-height:15.275px">727</div><div style="left:67.5px;top:302.40px;line-height:15.275px">Primrose yellow</div><svg style="position:absolute;left:201.80px;top:305.49px" width="8.3" height="8.3" viewBox="0 0 8 8"><path d="M0.5,4.5a3.5,3.5 0 0 1 7,0z" fill="#111"/><path d="M0.5,4.5v2.8h7v-2.8" fill="#fff" stroke="#111" stroke-width="0.7"/></svg><div class="r" style="left:217.2px;width:23.4px;top:302.40px;line-height:15.275px">3801</div><div style="left:248.4px;top:302.40px;line-height:15.275px">Tulip red</div><svg style="position:absolute;left:21.40px;top:320.76px" width="8.3" height="8.3" viewBox="0 0 8 8"><path d="M4,0.3v7.4M0.3,4h7.4M1.2,1.2l5.6,5.6M6.8,1.2l-5.6,5.6" stroke="#111" stroke-width="1.3"/></svg><div class="r" style="left:36.3px;width:23.4px;top:317.68px;line-height:15.275px">791</div><div style="left:67.5px;top:317.68px;line-height:15.275px">Dark cornflower blue</div><svg style="position:absolute;left:201.80px;top:320.76px" width="8.3" height="8.3" viewBox="0 0 8 8"><rect x="0.5" y="0.5" width="7" height="7" fill="#fff" stroke="#999" stroke-width="0.6"/><text x="4" y="6" font-family="Liberation Sans,sans-serif" font-size="4.4" font-weight="normal" text-anchor="middle" fill="#777">I</text></svg><div class="r" style="left:217.2px;width:23.4px;top:317.68px;line-height:15.275px">3865</div><div style="left:248.4px;top:317.68px;line-height:15.275px">Winter white</div><svg style="position:absolute;left:21.40px;top:336.04px" width="8.3" height="8.3" viewBox="0 0 8 8"><rect x="0.3" y="0.3" width="7.4" height="7.4" fill="#111"/><rect x="2.8" y="2.8" width="2.4" height="2.4" fill="#fff"/></svg><div class="r" style="left:36.3px;width:23.4px;top:332.95px;line-height:15.275px">792</div><div style="left:67.5px;top:332.95px;line-height:15.275px">Deep cornflower blue</div><svg style="position:absolute;left:201.80px;top:336.04px" width="8.3" height="8.3" viewBox="0 0 8 8"><rect x="0.5" y="0.5" width="7" height="7" fill="#fff" stroke="#999" stroke-width="0.6"/><text x="4" y="6" font-family="Liberation Sans,sans-serif" font-size="4.4" font-weight="normal" text-anchor="middle" fill="#555">H</text></svg><div class="r" style="left:217.2px;width:23.4px;top:332.95px;line-height:15.275px">3866</div><div style="left:248.4px;top:332.95px;line-height:15.275px">Garlic cream</div><div style="left:81.2px;top:357.6px;line-height:37.2px">Back stitch all in 1 strand. Blackbird beaks and legs in 922. All other back stitch in 3371.</div><div style="left:81.2px;top:394.8px;line-height:30.5px">French knots all in 3371.</div><div style="left:81.2px;top:430.6px;line-height:6.65px">Mill Hill Seed Beads — headlights on bookmobile in 00128 Yellow; pram hood hinge, pram axle, top<br>of ladder, end of ladder rope, bicycle bell in 00150 Grey; woman with pram’s hair bobble in 00165<br>Red; Women with pram’s earring, door knobs in 00557 Gold.</div><div style="left:14.8px;top:476px;line-height:9.7px">Keep an eye out for the next <span class="deco sq">Brightsea<svg class="zz" height="2"><rect width="100%" height="2" fill="url(#zzp)"/></svg></span> <span class="deco">Village</span> pattern at <span class="lk sq">ellijenks.com<svg class="zz" height="2"><rect width="100%" height="2" fill="url(#zzp)"/></svg></span> or email <span class="lk sq">elli@ellijenks.com<svg class="zz" height="2"><rect width="100%" height="2" fill="url(#zzp)"/></svg></span> and ask to be added to the<br>Minute Matters email list to be <span class="sq">notified<svg class="zz" height="2"><rect width="100%" height="2" fill="url(#zzp)"/></svg></span> when new Minute Matters patterns are released.</div><div style="left:14.8px;top:501.6px;line-height:9.7px">Design by Elli Jenks</div><div style="left:14.8px;top:517.2px;line-height:9.7px">Copyright © 2016 by Elli Jenks. All rights reserved.</div></div></div></div><div class="thumbwrap" style="left:37.7px;top:210.9px;width:96.3px;height:136.6px"><div style="transform:scale(0.24566);transform-origin:0 0;width:392px;height:553px;position:absolute;left:0;top:0"><div class="page"><svg style="position:absolute;left:0;top:0" width="392" height="553" viewBox="0 0 392 553"><g stroke="#808080" stroke-width="1.4" fill="none"><rect x="19" y="28" width="354" height="378"/><path d="M19,54H373M19,104H373M19,170H373M19,224H373M19,280H373M19,322H373M19,370H373M197,104V280"/></g><g stroke="#777" stroke-width="1.1" fill="none"><path d="M240,115l60,45M300,115l-60,45M270,110v55M235,138h75M250,118q20,30 45,34M245,150q25,-30 50,-28"/><path d="M232,185h90M232,197h90M232,209h90M250,180v38M270,180v38M290,180v38M310,180v38M262,212q30,-10 52,-30"/><path d="M275,232q-8,14 2,22q8,6 -4,18M268,262q8,8 14,-2"/></g></svg><div style="left:24px;top:32px;font-size:9px;line-height:20px"><span class="deco" style="color:#888">Brightsea Village</span> <b>– Recommended Stitching Methods</b></div><div style="left:24px;top:57.0px;font-size:5.6px;line-height:6.4px;width:340px;overflow:hidden;color:#333">This design is intended to be stitched on 16ct Aida (over 1x1) canvas using two strands of embroidery cotton over one</div><div style="left:24px;top:63.4px;font-size:5.6px;line-height:6.4px;width:340px;overflow:hidden;color:#333">strand of canvas.</div><div style="left:24px;top:69.8px;font-size:5.6px;line-height:6.4px;width:340px;overflow:hidden;color:#333">Where large or more than one space of a design, allow at least 2cm (about 1in) between pieces if stitching on one</div><div style="left:24px;top:76.2px;font-size:5.6px;line-height:6.4px;width:340px;overflow:hidden;color:#333">piece of fabric.</div><div style="left:24px;top:82.6px;font-size:5.6px;line-height:6.4px;width:340px;overflow:hidden;color:#333">Cut work out in one stitch from either back stitch. Stitch any part repeats at the booklet if needed.</div><div style="left:24px;top:107px;font-weight:bold;font-size:6px;line-height:7px">Cross stitch</div><div style="left:24px;top:114.0px;font-size:5.6px;line-height:6.4px;width:165px;overflow:hidden;color:#333">Consider the following for embroidery fabric to use. Tension any</div><div style="left:24px;top:120.4px;font-size:5.6px;line-height:6.4px;width:165px;overflow:hidden;color:#333">material. Work from the starred section on a small cross of any kind,</div><div style="left:24px;top:126.8px;font-size:5.6px;line-height:6.4px;width:165px;overflow:hidden;color:#333">each movement will be left-leaning then back-facing cross, except for</div><div style="left:24px;top:133.2px;font-size:5.6px;line-height:6.4px;width:165px;overflow:hidden;color:#333">one part.</div><div style="left:24px;top:173px;font-weight:bold;font-size:6px;line-height:7px">Back stitch</div><div style="left:24px;top:180.0px;font-size:5.6px;line-height:6.4px;width:165px;overflow:hidden;color:#333">Follow this numbered stitches below. Work again to this</div><div style="left:24px;top:186.4px;font-size:5.6px;line-height:6.4px;width:165px;overflow:hidden;color:#333">sequenced alternative. Create this even accommodating that it would</div><div style="left:24px;top:192.8px;font-size:5.6px;line-height:6.4px;width:165px;overflow:hidden;color:#333">remain itself up an use to be continued forward.</div><div style="left:24px;top:227px;font-weight:bold;font-size:6px;line-height:7px">French knots</div><div style="left:24px;top:234.0px;font-size:5.6px;line-height:6.4px;width:165px;overflow:hidden;color:#333">French knots may be made in three floating strands of mixture</div><div style="left:24px;top:240.4px;font-size:5.6px;line-height:6.4px;width:165px;overflow:hidden;color:#333">twist the full. Follow the threading from the second into another</div><div style="left:24px;top:246.8px;font-size:5.6px;line-height:6.4px;width:165px;overflow:hidden;color:#333">point push it by, tug along it looser through and underneath cloth to</div><div style="left:24px;top:253.2px;font-size:5.6px;line-height:6.4px;width:165px;overflow:hidden;color:#333">then finish, having already shown in this project through.</div><div style="left:24px;top:283px;font-weight:bold;font-size:6px;line-height:7px">Adding a “bead”</div><div style="left:24px;top:290.0px;font-size:5.6px;line-height:6.4px;width:340px;overflow:hidden;color:#333">The notes listed be thread on two for embroidery ribbons and thread again via the first thread. A slit three-piece rolling</div><div style="left:24px;top:296.4px;font-size:5.6px;line-height:6.4px;width:340px;overflow:hidden;color:#333">spread the length of the threading by put all that the stitcher to go. Thread up the needle with both this needle head through</div><div style="left:24px;top:302.8px;font-size:5.6px;line-height:6.4px;width:340px;overflow:hidden;color:#333">your thread, up, in and out up through.</div><div style="left:24px;top:325px;font-weight:bold;font-size:6px;line-height:7px">Copyrights</div><div style="left:24px;top:332.0px;font-size:5.6px;line-height:6.4px;width:340px;overflow:hidden;color:#333">1. Take the time to withhold pattern and use them before you know them to about it. What am I in displaying this number to</div><div style="left:24px;top:338.4px;font-size:5.6px;line-height:6.4px;width:340px;overflow:hidden;color:#333">work by. 2. After a conclusion of a working pattern due to the option of third party in any way, including to unlimited free photos to display. There</div><div style="left:24px;top:344.8px;font-size:5.6px;line-height:6.4px;width:340px;overflow:hidden;color:#333">does it have so as put stitches. After effect always organises a good possibility. Give yourself something to possible purchases from the</div><div style="left:24px;top:351.2px;font-size:5.6px;line-height:6.4px;width:340px;overflow:hidden;color:#333">company on forth but find bags. Find information additional extra on to share it with them. What is not quite enough to stop and of the</div><div style="left:24px;top:357.6px;font-size:5.6px;line-height:6.4px;width:340px;overflow:hidden;color:#333">meeting point if an area, redesign a alternative an up to not pre-supplied maintaining.</div><div style="left:24px;top:373.0px;font-size:5.6px;line-height:6.4px;width:340px;overflow:hidden;color:#333">Thank you SO, keep your <span class="deco">Brightsea Village</span> modeling. If you would like to see my other designs, please visit</div><div style="left:24px;top:379.4px;font-size:5.6px;line-height:6.4px;width:340px;overflow:hidden;color:#333"><span class="lk">www.ellijenks.com</span></div><div style="left:24px;top:385.8px;font-size:5.6px;line-height:6.4px;width:340px;overflow:hidden;color:#333">Elli Jenks</div></div></div></div></div><div class="plabel" style="top:255.5px">Page 1</div><div class="plabel" style="top:416.7px">Page 2</div><div class="abs" style="left:198.5px;top:65px;width:653px;height:14px;background:#3b3b3b"></div><div class="abs" style="left:198.5px;top:65px;width:13.8px;height:618px;background:#3b3b3b"></div><svg class="abs" style="left:198.5px;top:65px" width="653" height="618" viewBox="198.5 65 653 618" font-family="Liberation Sans,sans-serif" font-size="6.6" fill="#a8a8a8"><text x="201.2" y="74.2" font-size="6.2" fill="#9a9a9a">mm</text><text x="223.90" y="72.2" text-anchor="middle">-60</text><text x="261.17" y="72.2" text-anchor="middle">-40</text><text x="298.43" y="72.2" text-anchor="middle">-20</text><text x="335.70" y="72.2" text-anchor="middle">0</text><text x="372.97" y="72.2" text-anchor="middle">20</text><text x="410.23" y="72.2" text-anchor="middle">40</text><text x="447.50" y="72.2" text-anchor="middle">60</text><text x="484.76" y="72.2" text-anchor="middle">80</text><text x="522.03" y="72.2" text-anchor="middle">100</text><text x="559.30" y="72.2" text-anchor="middle">120</text><text x="596.56" y="72.2" text-anchor="middle">140</text><text x="633.83" y="72.2" text-anchor="middle">160</text><text x="671.09" y="72.2" text-anchor="middle">180</text><text x="708.36" y="72.2" text-anchor="middle">200</text><text x="745.63" y="72.2" text-anchor="middle">220</text><text x="782.89" y="72.2" text-anchor="middle">240</text><text x="820.16" y="72.2" text-anchor="middle">260</text><text transform="translate(205.3 104.00) rotate(-90)" text-anchor="middle">0</text><text transform="translate(205.3 141.27) rotate(-90)" text-anchor="middle">20</text><text transform="translate(205.3 178.53) rotate(-90)" text-anchor="middle">40</text><text transform="translate(205.3 215.80) rotate(-90)" text-anchor="middle">60</text><text transform="translate(205.3 253.06) rotate(-90)" text-anchor="middle">80</text><text transform="translate(205.3 290.33) rotate(-90)" text-anchor="middle">100</text><text transform="translate(205.3 327.60) rotate(-90)" text-anchor="middle">120</text><text transform="translate(205.3 364.86) rotate(-90)" text-anchor="middle">140</text><text transform="translate(205.3 402.13) rotate(-90)" text-anchor="middle">160</text><text transform="translate(205.3 439.39) rotate(-90)" text-anchor="middle">180</text><text transform="translate(205.3 476.66) rotate(-90)" text-anchor="middle">200</text><text transform="translate(205.3 513.93) rotate(-90)" text-anchor="middle">220</text><text transform="translate(205.3 551.19) rotate(-90)" text-anchor="middle">240</text><text transform="translate(205.3 588.46) rotate(-90)" text-anchor="middle">260</text><text transform="translate(205.3 625.72) rotate(-90)" text-anchor="middle">280</text><text transform="translate(205.3 662.99) rotate(-90)" text-anchor="middle">300</text><rect x="216.00" y="75.8" width="0.9" height="3.2" fill="#a6a6a6"/><rect x="219.78" y="77.3" width="0.8" height="1.7" fill="#8c8c8c"/><rect x="223.30" y="73.8" width="1.1" height="5.2" fill="#cfcfcf"/><rect x="227.23" y="77.3" width="0.8" height="1.7" fill="#8c8c8c"/><rect x="230.91" y="75.8" width="0.9" height="3.2" fill="#a6a6a6"/><rect x="234.68" y="77.3" width="0.8" height="1.7" fill="#8c8c8c"/><rect x="238.36" y="75.8" width="0.9" height="3.2" fill="#a6a6a6"/><rect x="242.13" y="77.3" width="0.8" height="1.7" fill="#8c8c8c"/><rect x="245.81" y="75.8" width="0.9" height="3.2" fill="#a6a6a6"/><rect x="249.59" y="77.3" width="0.8" height="1.7" fill="#8c8c8c"/><rect x="253.26" y="75.8" width="0.9" height="3.2" fill="#a6a6a6"/><rect x="257.04" y="77.3" width="0.8" height="1.7" fill="#8c8c8c"/><rect x="260.57" y="73.8" width="1.1" height="5.2" fill="#cfcfcf"/><rect x="264.49" y="77.3" width="0.8" height="1.7" fill="#8c8c8c"/><rect x="268.17" y="75.8" width="0.9" height="3.2" fill="#a6a6a6"/><rect x="271.95" y="77.3" width="0.8" height="1.7" fill="#8c8c8c"/><rect x="275.62" y="75.8" width="0.9" height="3.2" fill="#a6a6a6"/><rect x="279.40" y="77.3" width="0.8" height="1.7" fill="#8c8c8c"/><rect x="283.08" y="75.8" width="0.9" height="3.2" fill="#a6a6a6"/><rect x="286.85" y="77.3" width="0.8" height="1.7" fill="#8c8c8c"/><rect x="290.53" y="75.8" width="0.9" height="3.2" fill="#a6a6a6"/><rect x="294.31" y="77.3" width="0.8" height="1.7" fill="#8c8c8c"/><rect x="297.83" y="73.8" width="1.1" height="5.2" fill="#cfcfcf"/><rect x="301.76" y="77.3" width="0.8" height="1.7" fill="#8c8c8c"/><rect x="305.44" y="75.8" width="0.9" height="3.2" fill="#a6a6a6"/><rect x="309.21" y="77.3" width="0.8" height="1.7" fill="#8c8c8c"/><rect x="312.89" y="75.8" width="0.9" height="3.2" fill="#a6a6a6"/><rect x="316.67" y="77.3" width="0.8" height="1.7" fill="#8c8c8c"/><rect x="320.34" y="75.8" width="0.9" height="3.2" fill="#a6a6a6"/><rect x="324.12" y="77.3" width="0.8" height="1.7" fill="#8c8c8c"/><rect x="327.80" y="75.8" width="0.9" height="3.2" fill="#a6a6a6"/><rect x="331.57" y="77.3" width="0.8" height="1.7" fill="#8c8c8c"/><rect x="335.10" y="73.8" width="1.1" height="5.2" fill="#cfcfcf"/><rect x="339.03" y="77.3" width="0.8" height="1.7" fill="#8c8c8c"/><rect x="342.70" y="75.8" width="0.9" height="3.2" fill="#a6a6a6"/><rect x="346.48" y="77.3" width="0.8" height="1.7" fill="#8c8c8c"/><rect x="350.16" y="75.8" width="0.9" height="3.2" fill="#a6a6a6"/><rect x="353.93" y="77.3" width="0.8" height="1.7" fill="#8c8c8c"/><rect x="357.61" y="75.8" width="0.9" height="3.2" fill="#a6a6a6"/><rect x="361.39" y="77.3" width="0.8" height="1.7" fill="#8c8c8c"/><rect x="365.06" y="75.8" width="0.9" height="3.2" fill="#a6a6a6"/><rect x="368.84" y="77.3" width="0.8" height="1.7" fill="#8c8c8c"/><rect x="372.37" y="73.8" width="1.1" height="5.2" fill="#cfcfcf"/><rect x="376.29" y="77.3" width="0.8" height="1.7" fill="#8c8c8c"/><rect x="379.97" y="75.8" width="0.9" height="3.2" fill="#a6a6a6"/><rect x="383.75" y="77.3" width="0.8" height="1.7" fill="#8c8c8c"/><rect x="387.42" y="75.8" width="0.9" height="3.2" fill="#a6a6a6"/><rect x="391.20" y="77.3" width="0.8" height="1.7" fill="#8c8c8c"/><rect x="394.88" y="75.8" width="0.9" height="3.2" fill="#a6a6a6"/><rect x="398.65" y="77.3" width="0.8" height="1.7" fill="#8c8c8c"/><rect x="402.33" y="75.8" width="0.9" height="3.2" fill="#a6a6a6"/><rect x="406.11" y="77.3" width="0.8" height="1.7" fill="#8c8c8c"/><rect x="409.63" y="73.8" width="1.1" height="5.2" fill="#cfcfcf"/><rect x="413.56" y="77.3" width="0.8" height="1.7" fill="#8c8c8c"/><rect x="417.24" y="75.8" width="0.9" height="3.2" fill="#a6a6a6"/><rect x="421.01" y="77.3" width="0.8" height="1.7" fill="#8c8c8c"/><rect x="424.69" y="75.8" width="0.9" height="3.2" fill="#a6a6a6"/><rect x="428.47" y="77.3" width="0.8" height="1.7" fill="#8c8c8c"/><rect x="432.14" y="75.8" width="0.9" height="3.2" fill="#a6a6a6"/><rect x="435.92" y="77.3" width="0.8" height="1.7" fill="#8c8c8c"/><rect x="439.59" y="75.8" width="0.9" height="3.2" fill="#a6a6a6"/><rect x="443.37" y="77.3" width="0.8" height="1.7" fill="#8c8c8c"/><rect x="446.90" y="73.8" width="1.1" height="5.2" fill="#cfcfcf"/><rect x="450.82" y="77.3" width="0.8" height="1.7" fill="#8c8c8c"/><rect x="454.50" y="75.8" width="0.9" height="3.2" fill="#a6a6a6"/><rect x="458.28" y="77.3" width="0.8" height="1.7" fill="#8c8c8c"/><rect x="461.95" y="75.8" width="0.9" height="3.2" fill="#a6a6a6"/><rect x="465.73" y="77.3" width="0.8" height="1.7" fill="#8c8c8c"/><rect x="469.41" y="75.8" width="0.9" height="3.2" fill="#a6a6a6"/><rect x="473.18" y="77.3" width="0.8" height="1.7" fill="#8c8c8c"/><rect x="476.86" y="75.8" width="0.9" height="3.2" fill="#a6a6a6"/><rect x="480.64" y="77.3" width="0.8" height="1.7" fill="#8c8c8c"/><rect x="484.16" y="73.8" width="1.1" height="5.2" fill="#cfcfcf"/><rect x="488.09" y="77.3" width="0.8" height="1.7" fill="#8c8c8c"/><rect x="491.77" y="75.8" width="0.9" height="3.2" fill="#a6a6a6"/><rect x="495.54" y="77.3" width="0.8" height="1.7" fill="#8c8c8c"/><rect x="499.22" y="75.8" width="0.9" height="3.2" fill="#a6a6a6"/><rect x="503.00" y="77.3" width="0.8" height="1.7" fill="#8c8c8c"/><rect x="506.67" y="75.8" width="0.9" height="3.2" fill="#a6a6a6"/><rect x="510.45" y="77.3" width="0.8" height="1.7" fill="#8c8c8c"/><rect x="514.13" y="75.8" width="0.9" height="3.2" fill="#a6a6a6"/><rect x="517.90" y="77.3" width="0.8" height="1.7" fill="#8c8c8c"/><rect x="521.43" y="73.8" width="1.1" height="5.2" fill="#cfcfcf"/><rect x="525.36" y="77.3" width="0.8" height="1.7" fill="#8c8c8c"/><rect x="529.03" y="75.8" width="0.9" height="3.2" fill="#a6a6a6"/><rect x="532.81" y="77.3" width="0.8" height="1.7" fill="#8c8c8c"/><rect x="536.49" y="75.8" width="0.9" height="3.2" fill="#a6a6a6"/><rect x="540.26" y="77.3" width="0.8" height="1.7" fill="#8c8c8c"/><rect x="543.94" y="75.8" width="0.9" height="3.2" fill="#a6a6a6"/><rect x="547.72" y="77.3" width="0.8" height="1.7" fill="#8c8c8c"/><rect x="551.39" y="75.8" width="0.9" height="3.2" fill="#a6a6a6"/><rect x="555.17" y="77.3" width="0.8" height="1.7" fill="#8c8c8c"/><rect x="558.70" y="73.8" width="1.1" height="5.2" fill="#cfcfcf"/><rect x="562.62" y="77.3" width="0.8" height="1.7" fill="#8c8c8c"/><rect x="566.30" y="75.8" width="0.9" height="3.2" fill="#a6a6a6"/><rect x="570.08" y="77.3" width="0.8" height="1.7" fill="#8c8c8c"/><rect x="573.75" y="75.8" width="0.9" height="3.2" fill="#a6a6a6"/><rect x="577.53" y="77.3" width="0.8" height="1.7" fill="#8c8c8c"/><rect x="581.21" y="75.8" width="0.9" height="3.2" fill="#a6a6a6"/><rect x="584.98" y="77.3" width="0.8" height="1.7" fill="#8c8c8c"/><rect x="588.66" y="75.8" width="0.9" height="3.2" fill="#a6a6a6"/><rect x="592.44" y="77.3" width="0.8" height="1.7" fill="#8c8c8c"/><rect x="595.96" y="73.8" width="1.1" height="5.2" fill="#cfcfcf"/><rect x="599.89" y="77.3" width="0.8" height="1.7" fill="#8c8c8c"/><rect x="603.57" y="75.8" width="0.9" height="3.2" fill="#a6a6a6"/><rect x="607.34" y="77.3" width="0.8" height="1.7" fill="#8c8c8c"/><rect x="611.02" y="75.8" width="0.9" height="3.2" fill="#a6a6a6"/><rect x="614.79" y="77.3" width="0.8" height="1.7" fill="#8c8c8c"/><rect x="618.47" y="75.8" width="0.9" height="3.2" fill="#a6a6a6"/><rect x="622.25" y="77.3" width="0.8" height="1.7" fill="#8c8c8c"/><rect x="625.92" y="75.8" width="0.9" height="3.2" fill="#a6a6a6"/><rect x="629.70" y="77.3" width="0.8" height="1.7" fill="#8c8c8c"/><rect x="633.23" y="73.8" width="1.1" height="5.2" fill="#cfcfcf"/><rect x="637.15" y="77.3" width="0.8" height="1.7" fill="#8c8c8c"/><rect x="640.83" y="75.8" width="0.9" height="3.2" fill="#a6a6a6"/><rect x="644.61" y="77.3" width="0.8" height="1.7" fill="#8c8c8c"/><rect x="648.28" y="75.8" width="0.9" height="3.2" fill="#a6a6a6"/><rect x="652.06" y="77.3" width="0.8" height="1.7" fill="#8c8c8c"/><rect x="655.74" y="75.8" width="0.9" height="3.2" fill="#a6a6a6"/><rect x="659.51" y="77.3" width="0.8" height="1.7" fill="#8c8c8c"/><rect x="663.19" y="75.8" width="0.9" height="3.2" fill="#a6a6a6"/><rect x="666.97" y="77.3" width="0.8" height="1.7" fill="#8c8c8c"/><rect x="670.49" y="73.8" width="1.1" height="5.2" fill="#cfcfcf"/><rect x="674.42" y="77.3" width="0.8" height="1.7" fill="#8c8c8c"/><rect x="678.10" y="75.8" width="0.9" height="3.2" fill="#a6a6a6"/><rect x="681.87" y="77.3" width="0.8" height="1.7" fill="#8c8c8c"/><rect x="685.55" y="75.8" width="0.9" height="3.2" fill="#a6a6a6"/><rect x="689.33" y="77.3" width="0.8" height="1.7" fill="#8c8c8c"/><rect x="693.00" y="75.8" width="0.9" height="3.2" fill="#a6a6a6"/><rect x="696.78" y="77.3" width="0.8" height="1.7" fill="#8c8c8c"/><rect x="700.46" y="75.8" width="0.9" height="3.2" fill="#a6a6a6"/><rect x="704.23" y="77.3" width="0.8" height="1.7" fill="#8c8c8c"/><rect x="707.76" y="73.8" width="1.1" height="5.2" fill="#cfcfcf"/><rect x="711.69" y="77.3" width="0.8" height="1.7" fill="#8c8c8c"/><rect x="715.36" y="75.8" width="0.9" height="3.2" fill="#a6a6a6"/><rect x="719.14" y="77.3" width="0.8" height="1.7" fill="#8c8c8c"/><rect x="722.82" y="75.8" width="0.9" height="3.2" fill="#a6a6a6"/><rect x="726.59" y="77.3" width="0.8" height="1.7" fill="#8c8c8c"/><rect x="730.27" y="75.8" width="0.9" height="3.2" fill="#a6a6a6"/><rect x="734.05" y="77.3" width="0.8" height="1.7" fill="#8c8c8c"/><rect x="737.72" y="75.8" width="0.9" height="3.2" fill="#a6a6a6"/><rect x="741.50" y="77.3" width="0.8" height="1.7" fill="#8c8c8c"/><rect x="745.03" y="73.8" width="1.1" height="5.2" fill="#cfcfcf"/><rect x="748.95" y="77.3" width="0.8" height="1.7" fill="#8c8c8c"/><rect x="752.63" y="75.8" width="0.9" height="3.2" fill="#a6a6a6"/><rect x="756.41" y="77.3" width="0.8" height="1.7" fill="#8c8c8c"/><rect x="760.08" y="75.8" width="0.9" height="3.2" fill="#a6a6a6"/><rect x="763.86" y="77.3" width="0.8" height="1.7" fill="#8c8c8c"/><rect x="767.54" y="75.8" width="0.9" height="3.2" fill="#a6a6a6"/><rect x="771.31" y="77.3" width="0.8" height="1.7" fill="#8c8c8c"/><rect x="774.99" y="75.8" width="0.9" height="3.2" fill="#a6a6a6"/><rect x="778.77" y="77.3" width="0.8" height="1.7" fill="#8c8c8c"/><rect x="782.29" y="73.8" width="1.1" height="5.2" fill="#cfcfcf"/><rect x="786.22" y="77.3" width="0.8" height="1.7" fill="#8c8c8c"/><rect x="789.90" y="75.8" width="0.9" height="3.2" fill="#a6a6a6"/><rect x="793.67" y="77.3" width="0.8" height="1.7" fill="#8c8c8c"/><rect x="797.35" y="75.8" width="0.9" height="3.2" fill="#a6a6a6"/><rect x="801.12" y="77.3" width="0.8" height="1.7" fill="#8c8c8c"/><rect x="804.80" y="75.8" width="0.9" height="3.2" fill="#a6a6a6"/><rect x="808.58" y="77.3" width="0.8" height="1.7" fill="#8c8c8c"/><rect x="812.25" y="75.8" width="0.9" height="3.2" fill="#a6a6a6"/><rect x="816.03" y="77.3" width="0.8" height="1.7" fill="#8c8c8c"/><rect x="819.56" y="73.8" width="1.1" height="5.2" fill="#cfcfcf"/><rect x="823.48" y="77.3" width="0.8" height="1.7" fill="#8c8c8c"/><rect x="827.16" y="75.8" width="0.9" height="3.2" fill="#a6a6a6"/><rect x="830.94" y="77.3" width="0.8" height="1.7" fill="#8c8c8c"/><rect x="834.61" y="75.8" width="0.9" height="3.2" fill="#a6a6a6"/><rect x="838.39" y="77.3" width="0.8" height="1.7" fill="#8c8c8c"/><rect x="842.07" y="75.8" width="0.9" height="3.2" fill="#a6a6a6"/><rect x="845.84" y="77.3" width="0.8" height="1.7" fill="#8c8c8c"/><rect x="849.52" y="75.8" width="0.9" height="3.2" fill="#a6a6a6"/><rect x="209.1" y="81.19" width="3.2" height="0.9" fill="#a6a6a6"/><rect x="210.6" y="84.97" width="1.7" height="0.8" fill="#8c8c8c"/><rect x="209.1" y="88.64" width="3.2" height="0.9" fill="#a6a6a6"/><rect x="210.6" y="92.42" width="1.7" height="0.8" fill="#8c8c8c"/><rect x="209.1" y="96.10" width="3.2" height="0.9" fill="#a6a6a6"/><rect x="210.6" y="99.87" width="1.7" height="0.8" fill="#8c8c8c"/><rect x="207" y="103.45" width="5.3" height="1.1" fill="#cfcfcf"/><rect x="210.6" y="107.33" width="1.7" height="0.8" fill="#8c8c8c"/><rect x="209.1" y="111.00" width="3.2" height="0.9" fill="#a6a6a6"/><rect x="210.6" y="114.78" width="1.7" height="0.8" fill="#8c8c8c"/><rect x="209.1" y="118.46" width="3.2" height="0.9" fill="#a6a6a6"/><rect x="210.6" y="122.23" width="1.7" height="0.8" fill="#8c8c8c"/><rect x="209.1" y="125.91" width="3.2" height="0.9" fill="#a6a6a6"/><rect x="210.6" y="129.69" width="1.7" height="0.8" fill="#8c8c8c"/><rect x="209.1" y="133.36" width="3.2" height="0.9" fill="#a6a6a6"/><rect x="210.6" y="137.14" width="1.7" height="0.8" fill="#8c8c8c"/><rect x="207" y="140.72" width="5.3" height="1.1" fill="#cfcfcf"/><rect x="210.6" y="144.59" width="1.7" height="0.8" fill="#8c8c8c"/><rect x="209.1" y="148.27" width="3.2" height="0.9" fill="#a6a6a6"/><rect x="210.6" y="152.05" width="1.7" height="0.8" fill="#8c8c8c"/><rect x="209.1" y="155.72" width="3.2" height="0.9" fill="#a6a6a6"/><rect x="210.6" y="159.50" width="1.7" height="0.8" fill="#8c8c8c"/><rect x="209.1" y="163.18" width="3.2" height="0.9" fill="#a6a6a6"/><rect x="210.6" y="166.95" width="1.7" height="0.8" fill="#8c8c8c"/><rect x="209.1" y="170.63" width="3.2" height="0.9" fill="#a6a6a6"/><rect x="210.6" y="174.41" width="1.7" height="0.8" fill="#8c8c8c"/><rect x="207" y="177.98" width="5.3" height="1.1" fill="#cfcfcf"/><rect x="210.6" y="181.86" width="1.7" height="0.8" fill="#8c8c8c"/><rect x="209.1" y="185.54" width="3.2" height="0.9" fill="#a6a6a6"/><rect x="210.6" y="189.31" width="1.7" height="0.8" fill="#8c8c8c"/><rect x="209.1" y="192.99" width="3.2" height="0.9" fill="#a6a6a6"/><rect x="210.6" y="196.76" width="1.7" height="0.8" fill="#8c8c8c"/><rect x="209.1" y="200.44" width="3.2" height="0.9" fill="#a6a6a6"/><rect x="210.6" y="204.22" width="1.7" height="0.8" fill="#8c8c8c"/><rect x="209.1" y="207.89" width="3.2" height="0.9" fill="#a6a6a6"/><rect x="210.6" y="211.67" width="1.7" height="0.8" fill="#8c8c8c"/><rect x="207" y="215.25" width="5.3" height="1.1" fill="#cfcfcf"/><rect x="210.6" y="219.12" width="1.7" height="0.8" fill="#8c8c8c"/><rect x="209.1" y="222.80" width="3.2" height="0.9" fill="#a6a6a6"/><rect x="210.6" y="226.58" width="1.7" height="0.8" fill="#8c8c8c"/><rect x="209.1" y="230.25" width="3.2" height="0.9" fill="#a6a6a6"/><rect x="210.6" y="234.03" width="1.7" height="0.8" fill="#8c8c8c"/><rect x="209.1" y="237.71" width="3.2" height="0.9" fill="#a6a6a6"/><rect x="210.6" y="241.48" width="1.7" height="0.8" fill="#8c8c8c"/><rect x="209.1" y="245.16" width="3.2" height="0.9" fill="#a6a6a6"/><rect x="210.6" y="248.94" width="1.7" height="0.8" fill="#8c8c8c"/><rect x="207" y="252.51" width="5.3" height="1.1" fill="#cfcfcf"/><rect x="210.6" y="256.39" width="1.7" height="0.8" fill="#8c8c8c"/><rect x="209.1" y="260.07" width="3.2" height="0.9" fill="#a6a6a6"/><rect x="210.6" y="263.84" width="1.7" height="0.8" fill="#8c8c8c"/><rect x="209.1" y="267.52" width="3.2" height="0.9" fill="#a6a6a6"/><rect x="210.6" y="271.30" width="1.7" height="0.8" fill="#8c8c8c"/><rect x="209.1" y="274.97" width="3.2" height="0.9" fill="#a6a6a6"/><rect x="210.6" y="278.75" width="1.7" height="0.8" fill="#8c8c8c"/><rect x="209.1" y="282.43" width="3.2" height="0.9" fill="#a6a6a6"/><rect x="210.6" y="286.20" width="1.7" height="0.8" fill="#8c8c8c"/><rect x="207" y="289.78" width="5.3" height="1.1" fill="#cfcfcf"/><rect x="210.6" y="293.66" width="1.7" height="0.8" fill="#8c8c8c"/><rect x="209.1" y="297.33" width="3.2" height="0.9" fill="#a6a6a6"/><rect x="210.6" y="301.11" width="1.7" height="0.8" fill="#8c8c8c"/><rect x="209.1" y="304.79" width="3.2" height="0.9" fill="#a6a6a6"/><rect x="210.6" y="308.56" width="1.7" height="0.8" fill="#8c8c8c"/><rect x="209.1" y="312.24" width="3.2" height="0.9" fill="#a6a6a6"/><rect x="210.6" y="316.02" width="1.7" height="0.8" fill="#8c8c8c"/><rect x="209.1" y="319.69" width="3.2" height="0.9" fill="#a6a6a6"/><rect x="210.6" y="323.47" width="1.7" height="0.8" fill="#8c8c8c"/><rect x="207" y="327.05" width="5.3" height="1.1" fill="#cfcfcf"/><rect x="210.6" y="330.92" width="1.7" height="0.8" fill="#8c8c8c"/><rect x="209.1" y="334.60" width="3.2" height="0.9" fill="#a6a6a6"/><rect x="210.6" y="338.38" width="1.7" height="0.8" fill="#8c8c8c"/><rect x="209.1" y="342.05" width="3.2" height="0.9" fill="#a6a6a6"/><rect x="210.6" y="345.83" width="1.7" height="0.8" fill="#8c8c8c"/><rect x="209.1" y="349.51" width="3.2" height="0.9" fill="#a6a6a6"/><rect x="210.6" y="353.28" width="1.7" height="0.8" fill="#8c8c8c"/><rect x="209.1" y="356.96" width="3.2" height="0.9" fill="#a6a6a6"/><rect x="210.6" y="360.74" width="1.7" height="0.8" fill="#8c8c8c"/><rect x="207" y="364.31" width="5.3" height="1.1" fill="#cfcfcf"/><rect x="210.6" y="368.19" width="1.7" height="0.8" fill="#8c8c8c"/><rect x="209.1" y="371.87" width="3.2" height="0.9" fill="#a6a6a6"/><rect x="210.6" y="375.64" width="1.7" height="0.8" fill="#8c8c8c"/><rect x="209.1" y="379.32" width="3.2" height="0.9" fill="#a6a6a6"/><rect x="210.6" y="383.10" width="1.7" height="0.8" fill="#8c8c8c"/><rect x="209.1" y="386.77" width="3.2" height="0.9" fill="#a6a6a6"/><rect x="210.6" y="390.55" width="1.7" height="0.8" fill="#8c8c8c"/><rect x="209.1" y="394.22" width="3.2" height="0.9" fill="#a6a6a6"/><rect x="210.6" y="398.00" width="1.7" height="0.8" fill="#8c8c8c"/><rect x="207" y="401.58" width="5.3" height="1.1" fill="#cfcfcf"/><rect x="210.6" y="405.45" width="1.7" height="0.8" fill="#8c8c8c"/><rect x="209.1" y="409.13" width="3.2" height="0.9" fill="#a6a6a6"/><rect x="210.6" y="412.91" width="1.7" height="0.8" fill="#8c8c8c"/><rect x="209.1" y="416.58" width="3.2" height="0.9" fill="#a6a6a6"/><rect x="210.6" y="420.36" width="1.7" height="0.8" fill="#8c8c8c"/><rect x="209.1" y="424.04" width="3.2" height="0.9" fill="#a6a6a6"/><rect x="210.6" y="427.81" width="1.7" height="0.8" fill="#8c8c8c"/><rect x="209.1" y="431.49" width="3.2" height="0.9" fill="#a6a6a6"/><rect x="210.6" y="435.27" width="1.7" height="0.8" fill="#8c8c8c"/><rect x="207" y="438.84" width="5.3" height="1.1" fill="#cfcfcf"/><rect x="210.6" y="442.72" width="1.7" height="0.8" fill="#8c8c8c"/><rect x="209.1" y="446.40" width="3.2" height="0.9" fill="#a6a6a6"/><rect x="210.6" y="450.17" width="1.7" height="0.8" fill="#8c8c8c"/><rect x="209.1" y="453.85" width="3.2" height="0.9" fill="#a6a6a6"/><rect x="210.6" y="457.63" width="1.7" height="0.8" fill="#8c8c8c"/><rect x="209.1" y="461.30" width="3.2" height="0.9" fill="#a6a6a6"/><rect x="210.6" y="465.08" width="1.7" height="0.8" fill="#8c8c8c"/><rect x="209.1" y="468.76" width="3.2" height="0.9" fill="#a6a6a6"/><rect x="210.6" y="472.53" width="1.7" height="0.8" fill="#8c8c8c"/><rect x="207" y="476.11" width="5.3" height="1.1" fill="#cfcfcf"/><rect x="210.6" y="479.99" width="1.7" height="0.8" fill="#8c8c8c"/><rect x="209.1" y="483.66" width="3.2" height="0.9" fill="#a6a6a6"/><rect x="210.6" y="487.44" width="1.7" height="0.8" fill="#8c8c8c"/><rect x="209.1" y="491.12" width="3.2" height="0.9" fill="#a6a6a6"/><rect x="210.6" y="494.89" width="1.7" height="0.8" fill="#8c8c8c"/><rect x="209.1" y="498.57" width="3.2" height="0.9" fill="#a6a6a6"/><rect x="210.6" y="502.35" width="1.7" height="0.8" fill="#8c8c8c"/><rect x="209.1" y="506.02" width="3.2" height="0.9" fill="#a6a6a6"/><rect x="210.6" y="509.80" width="1.7" height="0.8" fill="#8c8c8c"/><rect x="207" y="513.38" width="5.3" height="1.1" fill="#cfcfcf"/><rect x="210.6" y="517.25" width="1.7" height="0.8" fill="#8c8c8c"/><rect x="209.1" y="520.93" width="3.2" height="0.9" fill="#a6a6a6"/><rect x="210.6" y="524.71" width="1.7" height="0.8" fill="#8c8c8c"/><rect x="209.1" y="528.38" width="3.2" height="0.9" fill="#a6a6a6"/><rect x="210.6" y="532.16" width="1.7" height="0.8" fill="#8c8c8c"/><rect x="209.1" y="535.84" width="3.2" height="0.9" fill="#a6a6a6"/><rect x="210.6" y="539.61" width="1.7" height="0.8" fill="#8c8c8c"/><rect x="209.1" y="543.29" width="3.2" height="0.9" fill="#a6a6a6"/><rect x="210.6" y="547.07" width="1.7" height="0.8" fill="#8c8c8c"/><rect x="207" y="550.64" width="5.3" height="1.1" fill="#cfcfcf"/><rect x="210.6" y="554.52" width="1.7" height="0.8" fill="#8c8c8c"/><rect x="209.1" y="558.20" width="3.2" height="0.9" fill="#a6a6a6"/><rect x="210.6" y="561.97" width="1.7" height="0.8" fill="#8c8c8c"/><rect x="209.1" y="565.65" width="3.2" height="0.9" fill="#a6a6a6"/><rect x="210.6" y="569.43" width="1.7" height="0.8" fill="#8c8c8c"/><rect x="209.1" y="573.10" width="3.2" height="0.9" fill="#a6a6a6"/><rect x="210.6" y="576.88" width="1.7" height="0.8" fill="#8c8c8c"/><rect x="209.1" y="580.55" width="3.2" height="0.9" fill="#a6a6a6"/><rect x="210.6" y="584.33" width="1.7" height="0.8" fill="#8c8c8c"/><rect x="207" y="587.91" width="5.3" height="1.1" fill="#cfcfcf"/><rect x="210.6" y="591.78" width="1.7" height="0.8" fill="#8c8c8c"/><rect x="209.1" y="595.46" width="3.2" height="0.9" fill="#a6a6a6"/><rect x="210.6" y="599.24" width="1.7" height="0.8" fill="#8c8c8c"/><rect x="209.1" y="602.91" width="3.2" height="0.9" fill="#a6a6a6"/><rect x="210.6" y="606.69" width="1.7" height="0.8" fill="#8c8c8c"/><rect x="209.1" y="610.37" width="3.2" height="0.9" fill="#a6a6a6"/><rect x="210.6" y="614.14" width="1.7" height="0.8" fill="#8c8c8c"/><rect x="209.1" y="617.82" width="3.2" height="0.9" fill="#a6a6a6"/><rect x="210.6" y="621.60" width="1.7" height="0.8" fill="#8c8c8c"/><rect x="207" y="625.17" width="5.3" height="1.1" fill="#cfcfcf"/><rect x="210.6" y="629.05" width="1.7" height="0.8" fill="#8c8c8c"/><rect x="209.1" y="632.73" width="3.2" height="0.9" fill="#a6a6a6"/><rect x="210.6" y="636.50" width="1.7" height="0.8" fill="#8c8c8c"/><rect x="209.1" y="640.18" width="3.2" height="0.9" fill="#a6a6a6"/><rect x="210.6" y="643.96" width="1.7" height="0.8" fill="#8c8c8c"/><rect x="209.1" y="647.63" width="3.2" height="0.9" fill="#a6a6a6"/><rect x="210.6" y="651.41" width="1.7" height="0.8" fill="#8c8c8c"/><rect x="209.1" y="655.09" width="3.2" height="0.9" fill="#a6a6a6"/><rect x="210.6" y="658.86" width="1.7" height="0.8" fill="#8c8c8c"/><rect x="207" y="662.44" width="5.3" height="1.1" fill="#cfcfcf"/><rect x="210.6" y="666.32" width="1.7" height="0.8" fill="#8c8c8c"/><rect x="209.1" y="669.99" width="3.2" height="0.9" fill="#a6a6a6"/><rect x="210.6" y="673.77" width="1.7" height="0.8" fill="#8c8c8c"/><rect x="209.1" y="677.45" width="3.2" height="0.9" fill="#a6a6a6"/><rect x="210.6" y="681.22" width="1.7" height="0.8" fill="#8c8c8c"/><rect x="486.1" y="66" width="1.1" height="13" fill="#dedede"/><rect x="199" y="681.2" width="13.3" height="1" fill="#a0a0a0"/></svg><div class="abs" style="left:0;top:0;width:391.8px;height:553px;transform:translate(335.55px,104px);overflow:hidden"><div class="page"><div class="tdeco" style="left:121.05px;top:13.5px;width:54.92px;line-height:16px;font-size:13px;transform:scaleX(0.765);transform-origin:0 0"><span class="sq">Brightsea<svg class="zz" height="2"><rect width="100%" height="2" fill="url(#zzp)"/></svg></span></div><div class="tdeco" style="left:167.45px;top:13.5px;line-height:16px;font-size:13px;transform:scaleX(0.709);transform-origin:0 0">Village</div><div style="left:196.65px;top:15.2px;line-height:16px;font-size:9.36px;color:#111">– #13 The Library</div><svg class="abs" style="position:absolute;left:0;top:0" width="392" height="553" viewBox="0 0 392 553"><rect x="14.8" y="43.3" width="361.3" height="14.2" fill="#c2c2c2"/><g stroke="#3a3a3a" stroke-width="0.55"><line x1="14.9" y1="43.3" x2="14.9" y2="347.73"/><line x1="35.7" y1="43.3" x2="35.7" y2="347.73"/><line x1="63.3" y1="43.3" x2="63.3" y2="347.73"/><line x1="196.0" y1="43.3" x2="196.0" y2="347.73"/><line x1="216.2" y1="43.3" x2="216.2" y2="347.73"/><line x1="243.8" y1="43.3" x2="243.8" y2="347.73"/><line x1="376.0" y1="43.3" x2="376.0" y2="347.73"/><line x1="14.8" y1="43.3" x2="376.1" y2="43.3"/><line x1="14.8" y1="57.50" x2="376.1" y2="57.50"/><line x1="14.8" y1="72.78" x2="376.1" y2="72.78"/><line x1="14.8" y1="88.05" x2="376.1" y2="88.05"/><line x1="14.8" y1="103.33" x2="376.1" y2="103.33"/><line x1="14.8" y1="118.60" x2="376.1" y2="118.60"/><line x1="14.8" y1="133.88" x2="376.1" y2="133.88"/><line x1="14.8" y1="149.15" x2="376.1" y2="149.15"/><line x1="14.8" y1="164.43" x2="376.1" y2="164.43"/><line x1="14.8" y1="179.70" x2="376.1" y2="179.70"/><line x1="14.8" y1="194.97" x2="376.1" y2="194.97"/><line x1="14.8" y1="210.25" x2="376.1" y2="210.25"/><line x1="14.8" y1="225.53" x2="376.1" y2="225.53"/><line x1="14.8" y1="240.80" x2="376.1" y2="240.80"/><line x1="14.8" y1="256.08" x2="376.1" y2="256.08"/><line x1="14.8" y1="271.35" x2="376.1" y2="271.35"/><line x1="14.8" y1="286.62" x2="376.1" y2="286.62"/><line x1="14.8" y1="301.90" x2="376.1" y2="301.90"/><line x1="14.8" y1="317.18" x2="376.1" y2="317.18"/><line x1="14.8" y1="332.45" x2="376.1" y2="332.45"/><line x1="14.8" y1="347.73" x2="376.1" y2="347.73"/><line x1="14.8" y1="357.6" x2="376.1" y2="357.6"/><line x1="14.8" y1="394.8" x2="376.1" y2="394.8"/><line x1="14.8" y1="425.3" x2="376.1" y2="425.3"/><line x1="14.8" y1="455.2" x2="376.1" y2="455.2"/><line x1="14.8" y1="357.6" x2="14.8" y2="455.2"/><line x1="76.9" y1="357.6" x2="76.9" y2="455.2"/><line x1="376.1" y1="357.6" x2="376.1" y2="455.2"/></g><g stroke="#111" stroke-width="0.7" fill="none"><rect x="25" y="365.5" width="42.5" height="21.5"/><path d="M35.6,365.5v21.5M46.25,365.5v21.5M56.9,365.5v21.5M25,376.2h42.5"/></g><path d="M33.5,376.2h25.5" stroke="#111" stroke-width="2"/><circle cx="46.5" cy="409.7" r="4" fill="#111"/><rect x="43.2" y="437.2" width="6.6" height="6.6" fill="#111"/></svg><div class="hd" style="left:36.3px;width:27.3px;top:44.099999999999994px;line-height:14.2px">DMC</div><div class="hd" style="left:63.6px;width:132.1px;top:44.099999999999994px;line-height:14.2px">Colour</div><div class="hd" style="left:217.2px;width:27.3px;top:44.099999999999994px;line-height:14.2px">DMC</div><div class="hd" style="left:244.5px;width:131.6px;top:44.099999999999994px;line-height:14.2px">Colour</div><svg style="position:absolute;left:21.40px;top:61.09px" width="8.3" height="8.3" viewBox="0 0 8 8"><rect x="0.5" y="0.5" width="7" height="7" fill="#fff" stroke="#666" stroke-width="0.6"/><path d="M4,1.5L6.6,6.6H1.4z" fill="#fff" stroke="#111" stroke-width="1.3"/></svg><div class="r" style="left:36.3px;width:23.4px;top:58.00px;line-height:15.275px">208</div><div style="left:67.5px;top:58.00px;line-height:15.275px">Pansy lavender</div><svg style="position:absolute;left:201.80px;top:61.09px" width="8.3" height="8.3" viewBox="0 0 8 8"><rect x="0.5" y="0.5" width="7" height="7" fill="#fff" stroke="#999" stroke-width="0.6"/><path d="M4,1.6L6.4,4L4,6.4L1.6,4z" fill="none" stroke="#777" stroke-width="0.7"/><circle cx="4" cy="4" r="0.8" fill="#777"/></svg><div class="r" style="left:217.2px;width:23.4px;top:58.00px;line-height:15.275px">793</div><div style="left:248.4px;top:58.00px;line-height:15.275px">Medium cornflower blue</div><svg style="position:absolute;left:21.40px;top:76.36px" width="8.3" height="8.3" viewBox="0 0 8 8"><rect x="0.5" y="0.5" width="7" height="7" fill="#fff" stroke="#666" stroke-width="0.6"/><path d="M4,3L6.8,6.8H1.2z" fill="#111"/></svg><div class="r" style="left:36.3px;width:23.4px;top:73.28px;line-height:15.275px">209</div><div style="left:67.5px;top:73.28px;line-height:15.275px">Lilac</div><svg style="position:absolute;left:201.80px;top:76.36px" width="8.3" height="8.3" viewBox="0 0 8 8"><rect x="0.5" y="0.5" width="7" height="7" fill="#fff" stroke="#222" stroke-width="0.8"/><path d="M1,1l6,6M7,1l-6,6" stroke="#111" stroke-width="1.4"/></svg><div class="r" style="left:217.2px;width:23.4px;top:73.28px;line-height:15.275px">794</div><div style="left:248.4px;top:73.28px;line-height:15.275px">Baby blue</div><svg style="position:absolute;left:21.40px;top:91.64px" width="8.3" height="8.3" viewBox="0 0 8 8"><rect x="0.5" y="0.5" width="7" height="7" fill="#fff" stroke="#999" stroke-width="0.6"/><text x="4" y="6" font-family="Liberation Sans,sans-serif" font-size="5.6" font-weight="bold" text-anchor="middle" fill="#111">#</text></svg><div class="r" style="left:36.3px;width:23.4px;top:88.55px;line-height:15.275px">321</div><div style="left:67.5px;top:88.55px;line-height:15.275px">Red</div><svg style="position:absolute;left:201.80px;top:91.64px" width="8.3" height="8.3" viewBox="0 0 8 8"><rect x="0.5" y="0.5" width="7" height="7" fill="#fff" stroke="#999" stroke-width="0.6"/><text x="4" y="6" font-family="Liberation Sans,sans-serif" font-size="4.4" font-weight="normal" text-anchor="middle" fill="#555">G</text></svg><div class="r" style="left:217.2px;width:23.4px;top:88.55px;line-height:15.275px">818</div><div style="left:248.4px;top:88.55px;line-height:15.275px">Powder pink</div><svg style="position:absolute;left:21.40px;top:106.91px" width="8.3" height="8.3" viewBox="0 0 8 8"><path d="M2.7,0.3h2.6v2.4h2.4v2.6h-2.4v2.4h-2.6v-2.4h-2.4v-2.6h2.4z" fill="#111"/></svg><div class="r" style="left:36.3px;width:23.4px;top:103.83px;line-height:15.275px">434</div><div style="left:67.5px;top:103.83px;line-height:15.275px">Cigar brown</div><svg style="position:absolute;left:201.80px;top:106.91px" width="8.3" height="8.3" viewBox="0 0 8 8"><rect x="0.5" y="0.5" width="7" height="7" fill="#fff" stroke="#bbb" stroke-width="0.6"/><text x="4" y="6" font-family="Liberation Sans,sans-serif" font-size="4.4" font-weight="normal" text-anchor="middle" fill="#aaa">v</text></svg><div class="r" style="left:217.2px;width:23.4px;top:103.83px;line-height:15.275px">819</div><div style="left:248.4px;top:103.83px;line-height:15.275px">Baby pink</div><svg style="position:absolute;left:21.40px;top:122.19px" width="8.3" height="8.3" viewBox="0 0 8 8"><rect x="0.8" y="0.8" width="6.4" height="6.4" fill="#fff" stroke="#111" stroke-width="1.3"/><path d="M1,4h6" stroke="#111" stroke-width="1.2"/></svg><div class="r" style="left:36.3px;width:23.4px;top:119.10px;line-height:15.275px">435</div><div style="left:67.5px;top:119.10px;line-height:15.275px"><span class="sq">Tabacco<svg class="zz" height="2"><rect width="100%" height="2" fill="url(#zzp)"/></svg></span> brown</div><svg style="position:absolute;left:201.80px;top:122.19px" width="8.3" height="8.3" viewBox="0 0 8 8"><rect x="0.5" y="0.5" width="7" height="7" fill="#fff" stroke="#222" stroke-width="0.8"/><path d="M1.6,1.2v2a2.4,2.6 0 0 0 4.8,0v-2M4,1v6" stroke="#111" stroke-width="1.4" fill="none"/></svg><div class="r" style="left:217.2px;width:23.4px;top:119.10px;line-height:15.275px">838</div><div style="left:248.4px;top:119.10px;line-height:15.275px">Dark wood</div><svg style="position:absolute;left:21.40px;top:137.46px" width="8.3" height="8.3" viewBox="0 0 8 8"><circle cx="4" cy="4" r="2.9" fill="#fff" stroke="#111" stroke-width="1.5"/></svg><div class="r" style="left:36.3px;width:23.4px;top:134.38px;line-height:15.275px">436</div><div style="left:67.5px;top:134.38px;line-height:15.275px">Teddy brown</div><svg style="position:absolute;left:201.80px;top:137.46px" width="8.3" height="8.3" viewBox="0 0 8 8"><rect x="0.5" y="0.5" width="7" height="7" fill="#fff" stroke="#222" stroke-width="0.8"/><path d="M1.6,7V3.8L4,1.4L6.4,3.8V7" fill="#fff" stroke="#111" stroke-width="1.3"/></svg><div class="r" style="left:217.2px;width:23.4px;top:134.38px;line-height:15.275px">839</div><div style="left:248.4px;top:134.38px;line-height:15.275px">Root brown</div><svg style="position:absolute;left:21.40px;top:152.74px" width="8.3" height="8.3" viewBox="0 0 8 8"><rect x="0.5" y="0.5" width="7" height="7" fill="#fff" stroke="#222" stroke-width="0.8"/><path d="M2,2.2h4M4,2.2v4" stroke="#111" stroke-width="1.1"/></svg><div class="r" style="left:36.3px;width:23.4px;top:149.65px;line-height:15.275px">437</div><div style="left:67.5px;top:149.65px;line-height:15.275px">Camel</div><svg style="position:absolute;left:201.80px;top:152.74px" width="8.3" height="8.3" viewBox="0 0 8 8"><rect x="0.5" y="0.5" width="7" height="7" fill="#fff" stroke="#222" stroke-width="0.8"/><path d="M0.8,1.4h6.4v3h-1.8v2.6h-2.8v-2.6h-1.8z" fill="#111"/></svg><div class="r" style="left:217.2px;width:23.4px;top:149.65px;line-height:15.275px">840</div><div style="left:248.4px;top:149.65px;line-height:15.275px">Hare brown</div><svg style="position:absolute;left:21.40px;top:168.01px" width="8.3" height="8.3" viewBox="0 0 8 8"><rect x="0.3" y="0.3" width="7.4" height="7.4" fill="#111"/><path d="M1.3,6.7v-4.4l4.4,4.4z" fill="#fff"/></svg><div class="r" style="left:36.3px;width:23.4px;top:164.93px;line-height:15.275px">498</div><div style="left:67.5px;top:164.93px;line-height:15.275px">Dark red</div><svg style="position:absolute;left:201.80px;top:168.01px" width="8.3" height="8.3" viewBox="0 0 8 8"><rect x="0.5" y="0.5" width="7" height="7" fill="#fff" stroke="#222" stroke-width="0.8"/><rect x="0.8" y="4.2" width="6.4" height="3" fill="#111"/></svg><div class="r" style="left:217.2px;width:23.4px;top:164.93px;line-height:15.275px">904</div><div style="left:248.4px;top:164.93px;line-height:15.275px">Avocado green</div><svg style="position:absolute;left:21.40px;top:183.29px" width="8.3" height="8.3" viewBox="0 0 8 8"><rect x="0.5" y="0.5" width="7" height="7" fill="#fff" stroke="#999" stroke-width="0.6"/><circle cx="4" cy="4" r="3" fill="#fff" stroke="#111" stroke-width="1"/><path d="M4,1a3,3 0 0 1 0,6z" fill="#111"/></svg><div class="r" style="left:36.3px;width:23.4px;top:180.20px;line-height:15.275px">640</div><div style="left:67.5px;top:180.20px;line-height:15.275px">Green grey</div><svg style="position:absolute;left:201.80px;top:183.29px" width="8.3" height="8.3" viewBox="0 0 8 8"><rect x="0.7" y="0.7" width="6.6" height="6.6" fill="#fff" stroke="#111" stroke-width="1.2"/><path d="M4,0.7v6.6M0.7,4h6.6" stroke="#111" stroke-width="1"/></svg><div class="r" style="left:217.2px;width:23.4px;top:180.20px;line-height:15.275px">905</div><div style="left:248.4px;top:180.20px;line-height:15.275px">Parrot green</div><svg style="position:absolute;left:21.40px;top:198.56px" width="8.3" height="8.3" viewBox="0 0 8 8"><rect x="0.4" y="0.4" width="7.2" height="7.2" fill="#111"/><path d="M1,1.2L4.6,4L1,6.8z" fill="#fff"/></svg><div class="r" style="left:36.3px;width:23.4px;top:195.47px;line-height:15.275px">642</div><div style="left:67.5px;top:195.47px;line-height:15.275px">Earth grey</div><svg style="position:absolute;left:201.80px;top:198.56px" width="8.3" height="8.3" viewBox="0 0 8 8"><rect x="0.5" y="0.5" width="7" height="7" fill="#fff" stroke="#999" stroke-width="0.6"/><path d="M1,1L4,4L1,7zM4,1L7,4L4,7z" fill="#111"/></svg><div class="r" style="left:217.2px;width:23.4px;top:195.47px;line-height:15.275px">906</div><div style="left:248.4px;top:195.47px;line-height:15.275px">Apple green</div><svg style="position:absolute;left:21.40px;top:213.84px" width="8.3" height="8.3" viewBox="0 0 8 8"><rect x="0.5" y="0.5" width="7" height="7" fill="#fff" stroke="#999" stroke-width="0.6"/><rect x="2.8" y="2.8" width="2.4" height="2.4" fill="#111"/></svg><div class="r" style="left:36.3px;width:23.4px;top:210.75px;line-height:15.275px">644</div><div style="left:67.5px;top:210.75px;line-height:15.275px">Light green grey</div><svg style="position:absolute;left:201.80px;top:213.84px" width="8.3" height="8.3" viewBox="0 0 8 8"><rect x="0.5" y="0.5" width="7" height="7" fill="#fff" stroke="#999" stroke-width="0.6"/><g fill="#111"><rect x="0.5" y="0.5" width="2.2" height="2.2"/><rect x="5.3" y="0.5" width="2.2" height="2.2"/><rect x="0.5" y="5.3" width="2.2" height="2.2"/><rect x="5.3" y="5.3" width="2.2" height="2.2"/></g></svg><div class="r" style="left:217.2px;width:23.4px;top:210.75px;line-height:15.275px">907</div><div style="left:248.4px;top:210.75px;line-height:15.275px">Granny Smith green</div><svg style="position:absolute;left:21.40px;top:229.11px" width="8.3" height="8.3" viewBox="0 0 8 8"><rect x="0.5" y="0.5" width="7" height="7" fill="#fff" stroke="#999" stroke-width="0.6"/><circle cx="4" cy="4" r="3.3" fill="#111"/><path d="M4,4L1.4,2.2A3.3,3.3 0 0 1 3.4,0.9z" fill="#fff"/></svg><div class="r" style="left:36.3px;width:23.4px;top:226.03px;line-height:15.275px">701</div><div style="left:67.5px;top:226.03px;line-height:15.275px">Lawn green</div><svg style="position:absolute;left:201.80px;top:229.11px" width="8.3" height="8.3" viewBox="0 0 8 8"><rect x="0.5" y="0.5" width="7" height="7" fill="#fff" stroke="#222" stroke-width="0.8"/><path d="M6.8,1.2L1.5,6.5M1.5,3.2v3.3h3.3" stroke="#111" stroke-width="1" fill="none"/></svg><div class="r" style="left:217.2px;width:23.4px;top:226.03px;line-height:15.275px">922</div><div style="left:248.4px;top:226.03px;line-height:15.275px"><span class="sq">Terracotta<svg class="zz" height="2"><rect width="100%" height="2" fill="url(#zzp)"/></svg></span></div><svg style="position:absolute;left:21.40px;top:244.39px" width="8.3" height="8.3" viewBox="0 0 8 8"><rect x="0.5" y="0.5" width="7" height="7" fill="#fff" stroke="#222" stroke-width="0.8"/><path d="M1,1.2h6L4,7z" fill="#111"/></svg><div class="r" style="left:36.3px;width:23.4px;top:241.30px;line-height:15.275px">702</div><div style="left:67.5px;top:241.30px;line-height:15.275px">Fresh green</div><svg style="position:absolute;left:201.80px;top:244.39px" width="8.3" height="8.3" viewBox="0 0 8 8"><rect x="0.5" y="0.5" width="7" height="7" fill="#fff" stroke="#999" stroke-width="0.6"/><circle cx="4" cy="2.8" r="1.1" fill="#111"/></svg><div class="r" style="left:217.2px;width:23.4px;top:241.30px;line-height:15.275px">3033</div><div style="left:248.4px;top:241.30px;line-height:15.275px">Antique silver</div><svg style="position:absolute;left:21.40px;top:259.66px" width="8.3" height="8.3" viewBox="0 0 8 8"><rect x="0.5" y="0.5" width="7" height="7" fill="#fff" stroke="#222" stroke-width="0.8"/><path d="M2.2,1v6M4,1v6M5.8,1v6" stroke="#111" stroke-width="0.9"/></svg><div class="r" style="left:36.3px;width:23.4px;top:256.58px;line-height:15.275px">703</div><div style="left:67.5px;top:256.58px;line-height:15.275px">Springtime green</div><svg style="position:absolute;left:201.80px;top:259.66px" width="8.3" height="8.3" viewBox="0 0 8 8"><rect x="0.5" y="0.5" width="7" height="7" fill="#fff" stroke="#999" stroke-width="0.6"/><path d="M1.2,0.6v6.2h6.2" stroke="#111" stroke-width="1.3" fill="none"/></svg><div class="r" style="left:217.2px;width:23.4px;top:256.58px;line-height:15.275px">3326</div><div style="left:248.4px;top:256.58px;line-height:15.275px"><span class="sq">Wildrose<svg class="zz" height="2"><rect width="100%" height="2" fill="url(#zzp)"/></svg></span></div><svg style="position:absolute;left:21.40px;top:274.94px" width="8.3" height="8.3" viewBox="0 0 8 8"><rect x="0.5" y="0.5" width="7" height="7" fill="#fff" stroke="#222" stroke-width="0.8"/><path d="M4,1.2v2.6M4,3.8L1.8,6.6M4,3.8L6.2,6.6" stroke="#111" stroke-width="0.8" fill="none"/></svg><div class="r" style="left:36.3px;width:23.4px;top:271.85px;line-height:15.275px">725</div><div style="left:67.5px;top:271.85px;line-height:15.275px">Sunlight yellow</div><svg style="position:absolute;left:201.80px;top:274.94px" width="8.3" height="8.3" viewBox="0 0 8 8"><rect x="0.5" y="0.5" width="7" height="7" fill="#fff" stroke="#999" stroke-width="0.6"/><path d="M2.6,0.7h2.8l1.9,1.9v2.8l-1.9,1.9h-2.8l-1.9,-1.9v-2.8z" fill="#111"/></svg><div class="r" style="left:217.2px;width:23.4px;top:271.85px;line-height:15.275px">3371</div><div style="left:248.4px;top:271.85px;line-height:15.275px">Ebony</div><svg style="position:absolute;left:21.40px;top:290.21px" width="8.3" height="8.3" viewBox="0 0 8 8"><rect x="0.5" y="0.5" width="7" height="7" fill="#fff" stroke="#222" stroke-width="0.8"/><path d="M4,1v6M1,4h6" stroke="#111" stroke-width="0.9"/></svg><div class="r" style="left:36.3px;width:23.4px;top:287.12px;line-height:15.275px">726</div><div style="left:67.5px;top:287.12px;line-height:15.275px">Mimosa yellow</div><svg style="position:absolute;left:201.80px;top:290.21px" width="8.3" height="8.3" viewBox="0 0 8 8"><rect x="0.5" y="0.5" width="7" height="7" fill="#fff" stroke="#999" stroke-width="0.6"/><g fill="#888"><circle cx="2.5" cy="2.5" r="0.5"/><circle cx="5.5" cy="5.5" r="0.5"/><circle cx="2.5" cy="5.5" r="0.5"/></g></svg><div class="r" style="left:217.2px;width:23.4px;top:287.12px;line-height:15.275px">3770</div><div style="left:248.4px;top:287.12px;line-height:15.275px">Pale eggshell cream</div><svg style="position:absolute;left:21.40px;top:305.49px" width="8.3" height="8.3" viewBox="0 0 8 8"><rect x="0.5" y="0.5" width="7" height="7" fill="#fff" stroke="#999" stroke-width="0.6"/><text x="4" y="6" font-family="Liberation Sans,sans-serif" font-size="4.6" font-weight="normal" text-anchor="middle" fill="#333">2</text></svg><div class="r" style="left:36.3px;width:23.4px;top:302.40px;line-height:15.275px">727</div><div style="left:67.5px;top:302.40px;line-height:15.275px">Primrose yellow</div><svg style="position:absolute;left:201.80px;top:305.49px" width="8.3" height="8.3" viewBox="0 0 8 8"><path d="M0.5,4.5a3.5,3.5 0 0 1 7,0z" fill="#111"/><path d="M0.5,4.5v2.8h7v-2.8" fill="#fff" stroke="#111" stroke-width="0.7"/></svg><div class="r" style="left:217.2px;width:23.4px;top:302.40px;line-height:15.275px">3801</div><div style="left:248.4px;top:302.40px;line-height:15.275px">Tulip red</div><svg style="position:absolute;left:21.40px;top:320.76px" width="8.3" height="8.3" viewBox="0 0 8 8"><path d="M4,0.3v7.4M0.3,4h7.4M1.2,1.2l5.6,5.6M6.8,1.2l-5.6,5.6" stroke="#111" stroke-width="1.3"/></svg><div class="r" style="left:36.3px;width:23.4px;top:317.68px;line-height:15.275px">791</div><div style="left:67.5px;top:317.68px;line-height:15.275px">Dark cornflower blue</div><svg style="position:absolute;left:201.80px;top:320.76px" width="8.3" height="8.3" viewBox="0 0 8 8"><rect x="0.5" y="0.5" width="7" height="7" fill="#fff" stroke="#999" stroke-width="0.6"/><text x="4" y="6" font-family="Liberation Sans,sans-serif" font-size="4.4" font-weight="normal" text-anchor="middle" fill="#777">I</text></svg><div class="r" style="left:217.2px;width:23.4px;top:317.68px;line-height:15.275px">3865</div><div style="left:248.4px;top:317.68px;line-height:15.275px">Winter white</div><svg style="position:absolute;left:21.40px;top:336.04px" width="8.3" height="8.3" viewBox="0 0 8 8"><rect x="0.3" y="0.3" width="7.4" height="7.4" fill="#111"/><rect x="2.8" y="2.8" width="2.4" height="2.4" fill="#fff"/></svg><div class="r" style="left:36.3px;width:23.4px;top:332.95px;line-height:15.275px">792</div><div style="left:67.5px;top:332.95px;line-height:15.275px">Deep cornflower blue</div><svg style="position:absolute;left:201.80px;top:336.04px" width="8.3" height="8.3" viewBox="0 0 8 8"><rect x="0.5" y="0.5" width="7" height="7" fill="#fff" stroke="#999" stroke-width="0.6"/><text x="4" y="6" font-family="Liberation Sans,sans-serif" font-size="4.4" font-weight="normal" text-anchor="middle" fill="#555">H</text></svg><div class="r" style="left:217.2px;width:23.4px;top:332.95px;line-height:15.275px">3866</div><div style="left:248.4px;top:332.95px;line-height:15.275px">Garlic cream</div><div style="left:81.2px;top:357.6px;line-height:37.2px">Back stitch all in 1 strand. Blackbird beaks and legs in 922. All other back stitch in 3371.</div><div style="left:81.2px;top:394.8px;line-height:30.5px">French knots all in 3371.</div><div style="left:81.2px;top:430.6px;line-height:6.65px">Mill Hill Seed Beads — headlights on bookmobile in 00128 Yellow; pram hood hinge, pram axle, top<br>of ladder, end of ladder rope, bicycle bell in 00150 Grey; woman with pram’s hair bobble in 00165<br>Red; Women with pram’s earring, door knobs in 00557 Gold.</div><div style="left:14.8px;top:476px;line-height:9.7px">Keep an eye out for the next <span class="deco sq">Brightsea<svg class="zz" height="2"><rect width="100%" height="2" fill="url(#zzp)"/></svg></span> <span class="deco">Village</span> pattern at <span class="lk sq">ellijenks.com<svg class="zz" height="2"><rect width="100%" height="2" fill="url(#zzp)"/></svg></span> or email <span class="lk sq">elli@ellijenks.com<svg class="zz" height="2"><rect width="100%" height="2" fill="url(#zzp)"/></svg></span> and ask to be added to the<br>Minute Matters email list to be <span class="sq">notified<svg class="zz" height="2"><rect width="100%" height="2" fill="url(#zzp)"/></svg></span> when new Minute Matters patterns are released.</div><div style="left:14.8px;top:501.6px;line-height:9.7px">Design by Elli Jenks</div><div style="left:14.8px;top:517.2px;line-height:9.7px">Copyright © 2016 by Elli Jenks. All rights reserved.</div><svg style="position:absolute;left:0;top:0;overflow:visible" width="392" height="553" viewBox="0 0 392 553"><g fill="none" stroke="#7fa5ee" stroke-width="1"><rect x="15.2" y="15" width="361.2" height="18.5"/><path d="M15.2,33.5V357.4M376.4,33.5V357.4M15.2,455.7V476M376.4,455.7V476"/><rect x="15.2" y="476" width="361.2" height="54.5"/></g><g fill="none" stroke="#5b8fe6" stroke-width="1"><rect x="15.2" y="357.4" width="361.2" height="98.3"/><path d="M195.8,338.1v19.3"/></g><circle cx="15.2" cy="357.4" r="2.6" fill="#2f6fd6" stroke="#e8f0ff" stroke-width="0.5"/><circle cx="195.8" cy="357.4" r="2.6" fill="#2f6fd6" stroke="#e8f0ff" stroke-width="0.5"/><circle cx="376.4" cy="357.4" r="2.6" fill="#2f6fd6" stroke="#e8f0ff" stroke-width="0.5"/><circle cx="15.2" cy="406.5" r="2.6" fill="#2f6fd6" stroke="#e8f0ff" stroke-width="0.5"/><circle cx="376.4" cy="406.5" r="2.6" fill="#2f6fd6" stroke="#e8f0ff" stroke-width="0.5"/><circle cx="15.2" cy="455.7" r="2.6" fill="#2f6fd6" stroke="#e8f0ff" stroke-width="0.5"/><circle cx="195.8" cy="455.7" r="2.6" fill="#2f6fd6" stroke="#e8f0ff" stroke-width="0.5"/><circle cx="376.4" cy="455.7" r="2.6" fill="#2f6fd6" stroke="#e8f0ff" stroke-width="0.5"/><circle cx="383.2" cy="462" r="2.6" fill="#2f6fd6" stroke="#e8f0ff" stroke-width="0.5"/><circle cx="195.6" cy="338.1" r="2.6" fill="#eef4ff" stroke="#5b8fe6" stroke-width="1"/></svg></div></div>
<div id="rpanel"><div class="tabbar" style="left:0;top:0;width:172.5px"><div class="grip" style="left:5px"></div><div class="t on" style="left:12.9px;width:24.8px">Colour</div><div class="t" style="left:41.5px">Swatches</div><div class="t" style="left:72.5px;color:#666">|</div><div class="t" style="left:76.5px">Stroke</div><svg class="menu" style="left:161px" width="9" height="8" viewBox="0 0 9 8"><path d="M0,1.5h6M0,3.7h6M0,5.9h6" stroke="#ddd" stroke-width="1"/><path d="M6.6,5l1.2,1.6l1.2,-1.6z" fill="#ddd"/></svg></div><svg class="abs" style="left:4.5px;top:18px" width="60" height="28" viewBox="856 83 60 28"><circle cx="866.8" cy="94" r="6.4" fill="none" stroke="#f4f4f4" stroke-width="2.4"/><path d="M871.2,89.2l1.6,1.5M862.3,98l1.4,1.6" stroke="#e85a4c" stroke-width="1.6"/><circle cx="873.8" cy="100.2" r="8.3" fill="#000" stroke="#3a3a3a" stroke-width="1"/><circle cx="861.8" cy="105.6" r="2.6" fill="#fff" stroke="#f2f2f2" stroke-width="0.6"/><path d="M860,107.4l3.6,-3.6" stroke="#e8453c" stroke-width="1"/><path d="M875.5,87.5q3.5,-1 4.5,3.5M874.6,88.6l1.6,-2.2M881.3,89.8l-1.3,2.2l-1.6,-1.6" stroke="#c8c8c8" stroke-width="0.9" fill="none"/><path d="M889.2,97.2l0.6,-2.2l4.2,-4.2l1.6,1.6l-4.2,4.2z" fill="#cfcfcf"/><ellipse cx="896.6" cy="88.6" rx="2.9" ry="2.1" transform="rotate(-45 896.6 88.6)" fill="#c8922e"/><path d="M893.4,90.2l2.4,2.4" stroke="#8a6a2a" stroke-width="1.2"/><circle cx="905.6" cy="90.5" r="4.7" fill="#000" stroke="#4a4a4a" stroke-width="0.6"/></svg><div class="rb" style="left:90.5px;top:24.3px;width:11.7px;height:12.7px;background:#363636"><svg width="11.7" height="12.7" viewBox="0 0 12 13"><rect x="3.2" y="5.8" width="5.6" height="4.6" rx="0.6" fill="#cfcfcf"/><path d="M4.3,6v-1.4a1.7,1.7 0 0 1 3.4,0v1.4" stroke="#cfcfcf" stroke-width="1" fill="none"/></svg></div><div class="rf" style="left:105.8px;top:24.3px;width:59.3px;height:12.7px;line-height:11.8px;font-size:6.2px;font-weight:bold;color:#d0d0d0;background:#3f3f3f;border-color:#303030">RGB</div><div class="abs" style="left:158.5px;top:27.6px;width:0;height:0;border-left:1.6px solid transparent;border-right:1.6px solid transparent;border-bottom:2.2px solid #d0d0d0"></div><div class="abs" style="left:158.5px;top:31.6px;width:0;height:0;border-left:1.6px solid transparent;border-right:1.6px solid transparent;border-top:2.2px solid #d0d0d0"></div><div class="lbl" style="left:5.3px;top:52.2px;line-height:8px;color:#cfcfcf;font-size:6.6px">R</div><div class="abs" style="left:16.8px;top:53.3px;width:124.4px;height:5.4px;border-radius:2.7px;background:linear-gradient(90deg,#000 2%,#e8301f 96%)"></div><div class="abs" style="left:14.5px;top:52.7px;width:6.6px;height:6.6px;border-radius:50%;background:#111;border:1.2px solid #f0f0f0"></div><div class="rf" style="left:144.7px;top:49.4px;width:23.6px;height:12px;line-height:12.4px;background:#343434;border-color:#3a3a3a;border-radius:2.5px;padding-left:2.2px;font-size:7px">0</div><div class="lbl" style="left:5.3px;top:65.6px;line-height:8px;color:#cfcfcf;font-size:6.6px">G</div><div class="abs" style="left:16.8px;top:66.7px;width:124.4px;height:5.4px;border-radius:2.7px;background:linear-gradient(90deg,#000 2%,#4fdc36 96%)"></div><div class="abs" style="left:14.5px;top:66.1px;width:6.6px;height:6.6px;border-radius:50%;background:#111;border:1.2px solid #f0f0f0"></div><div class="rf" style="left:144.7px;top:62.8px;width:23.6px;height:12px;line-height:12.4px;background:#343434;border-color:#3a3a3a;border-radius:2.5px;padding-left:2.2px;font-size:7px">0</div><div class="lbl" style="left:5.3px;top:79.0px;line-height:8px;color:#cfcfcf;font-size:6.6px">B</div><div class="abs" style="left:16.8px;top:80.1px;width:124.4px;height:5.4px;border-radius:2.7px;background:linear-gradient(90deg,#000 2%,#0a2cf0 96%)"></div><div class="abs" style="left:14.5px;top:79.5px;width:6.6px;height:6.6px;border-radius:50%;background:#111;border:1.2px solid #f0f0f0"></div><div class="rf" style="left:144.7px;top:76.2px;width:23.6px;height:12px;line-height:12.4px;background:#343434;border-color:#3a3a3a;border-radius:2.5px;padding-left:2.2px;font-size:7px">0</div><div class="abs" style="left:8.7px;top:94.5px;width:155.7px;height:26.1px;background:linear-gradient(180deg,#fff 0%,rgba(255,255,255,0.6) 22%,rgba(255,255,255,0) 48%,rgba(0,0,0,0) 52%,rgba(0,0,0,0.75) 82%,#000 100%),linear-gradient(90deg,#f0281e,#f5e02a 16.6%,#3ad62a 33.3%,#3ae4e8 50%,#1428e8 66.6%,#f03ae0 83.3%,#f0281e)"></div><div class="lbl" style="left:6.0px;top:126.2px;line-height:8px">Opacity</div><div class="abs" style="left:6.4px;top:136.6px;width:8.6px;height:8.6px;border-radius:50%;background:#000"></div><div class="abs" style="left:20.0px;top:138.2px;width:102px;height:5.4px;border-radius:2.7px;background:repeating-linear-gradient(90deg,rgba(0,0,0,0.10) 0 2.7px,rgba(0,0,0,0) 2.7px 5.4px),linear-gradient(90deg,#f4f4f4 0%,#cfcfcf 40%,#747474 75%,#3c3c3c 100%)"></div><div class="abs" style="left:116.4px;top:137.6px;width:6.6px;height:6.6px;border-radius:50%;background:#111;border:1.2px solid #f0f0f0"></div><div class="rf" style="left:129.7px;top:134.3px;width:38.6px;height:12.3px;line-height:12.4px;background:#343434;border-color:#383838;padding-left:2.4px">100 %</div><div class="abs" style="left:157.9px;top:134.9px;width:0.6px;height:11.1px;background:#444"></div><div class="arr" style="left:160.9px;top:139.6px;border-top-color:#d0d0d0"></div><div class="tabbar tb2" style="left:0;top:153.5px;width:172.5px;height:13.2px"><div class="grip" style="left:5px;top:3.5px"></div><div class="t" style="left:18.5px">Lyr</div><div class="t on" style="left:35.1px;width:34.9px">Character</div><div class="t" style="left:76.5px">Par</div><div class="t" style="left:92.5px;color:#555">|</div><div class="t" style="left:98.5px">TSt</div><div class="t" style="left:114.5px;color:#555">|</div><div class="t" style="left:119.5px">Frm</div><div class="t" style="left:136.5px;color:#555">|</div><div class="t" style="left:139.5px">Table</div><svg class="menu" style="left:161px" width="9" height="8" viewBox="0 0 9 8"><path d="M0,1.5h6M0,3.7h6M0,5.9h6" stroke="#ddd" stroke-width="1"/><path d="M6.6,5l1.2,1.6l1.2,-1.6z" fill="#ddd"/></svg></div><div class="rf" style="left:7.8px;top:173.8px;width:50.5px;height:11.5px;line-height:10.5px;background:#424242;border-color:#2e2e2e">All Fonts</div><div class="abs" style="left:53.0px;top:176.4px;width:0;height:0;border-left:1.6px solid transparent;border-right:1.6px solid transparent;border-bottom:2.2px solid #d0d0d0"></div><div class="abs" style="left:53.0px;top:180.4px;width:0;height:0;border-left:1.6px solid transparent;border-right:1.6px solid transparent;border-top:2.2px solid #d0d0d0"></div><div class="rf" style="left:60.7px;top:173.8px;width:106.8px;height:11.5px;line-height:10.5px;"></div><div class="abs" style="left:157.2px;top:174.4px;width:9.7px;height:10.3px;background:#424242;border-radius:0 1.5px 1.5px 0"></div><div class="arr" style="left:159.7px;top:178.2px;border-top-color:#e0e0e0"></div><div class="rf" style="left:7.8px;top:187.7px;width:50.5px;height:12.2px;line-height:11.2px;">12 pt</div><div class="abs" style="left:46.9px;top:188.3px;width:10.8px;height:11.0px;background:#424242;border-radius:0 1.5px 1.5px 0"></div><div class="arr" style="left:50.1px;top:192.3px;border-top-color:#e0e0e0"></div><div class="rf" style="left:60.7px;top:187.7px;width:73.2px;height:12.2px;line-height:11.2px;"></div><div class="abs" style="left:128.5px;top:190.4px;width:0;height:0;border-left:1.6px solid transparent;border-right:1.6px solid transparent;border-bottom:2.2px solid #d0d0d0"></div><div class="abs" style="left:128.5px;top:194.4px;width:0;height:0;border-left:1.6px solid transparent;border-right:1.6px solid transparent;border-top:2.2px solid #d0d0d0"></div><div class="sw" style="left:137.1px;top:187.9px;width:13.9px;height:11.8px;background:#000"></div><div class="sw" style="left:152.9px;top:187.9px;width:13.4px;height:11.8px"><svg width="100%" height="100%" viewBox="0 0 10 10" preserveAspectRatio="none" style="position:absolute;left:0;top:0"><path d="M0,10L10,0" stroke="#e8453c" stroke-width="1" vector-effect="non-scaling-stroke"/></svg></div><div class="rf" style="left:7.8px;top:203px;width:158.5px;height:12.7px;line-height:11.7px;">[No Style]</div><div class="abs" style="left:154.5px;top:203.6px;width:11.2px;height:11.5px;background:#424242;border-radius:0 1.5px 1.5px 0"></div><div class="arr" style="left:157.9px;top:207.8px;border-top-color:#e0e0e0"></div><div class="hdr" style="top:222.6px"><div class="tri-d" style="left:6.3px;top:3.8px"></div><span>Decorations</span></div><div class="rb" style="left:7.8px;top:239.6px;width:18.70px;height:12.0px;line-height:12.0px;background:#2a2a2a;border-radius:1.5px 0 0 1.5px;font-size:8.8px">U</div><div class="rb" style="left:26.8px;top:239.6px;width:18.40px;height:12.0px;line-height:12.0px;background:#464646;border-radius:0;font-size:8.8px"><u>U</u></div><div class="rb" style="left:45.5px;top:239.6px;width:18.40px;height:12.0px;line-height:12.0px;background:#464646;border-radius:0 1.5px 1.5px 0;font-size:8.8px"><u style="text-decoration-style:double">U</u></div><div class="sw" style="left:67.5px;top:239.9px;width:13.4px;height:11.6px"><svg width="100%" height="100%" viewBox="0 0 10 10" preserveAspectRatio="none" style="position:absolute;left:0;top:0"><path d="M0,10L10,0" stroke="#e8453c" stroke-width="1" vector-effect="non-scaling-stroke"/></svg></div><div class="rb" style="left:86.3px;top:239.6px;width:18.53px;height:12.0px;line-height:12.0px;background:#2a2a2a;border-radius:1.5px 0 0 1.5px;font-size:8.8px">S</div><div class="rb" style="left:105.13px;top:239.6px;width:18.23px;height:12.0px;line-height:12.0px;background:#464646;border-radius:0;font-size:8.8px"><s>S</s></div><div class="rb" style="left:123.67px;top:239.6px;width:18.23px;height:12.0px;line-height:12.0px;background:#464646;border-radius:0 1.5px 1.5px 0;font-size:8.8px"><s>S</s></div><div class="sw" style="left:146.1px;top:239.9px;width:13.4px;height:11.6px"><svg width="100%" height="100%" viewBox="0 0 10 10" preserveAspectRatio="none" style="position:absolute;left:0;top:0"><path d="M0,10L10,0" stroke="#e8453c" stroke-width="1" vector-effect="non-scaling-stroke"/></svg></div><div class="rf" style="left:2.9px;top:256px;width:117.6px;height:12.2px;line-height:11.2px;background:#333"></div><div class="abs" style="left:7.0px;top:262px;width:88px;height:0.6px;background:#666"></div><svg class="abs" style="left:45.5px;top:257px" width="12" height="11" viewBox="0 0 12 11"><path d="M1,10L11,0.5" stroke="#c8453c" stroke-width="0.8"/></svg><div class="lbl" style="left:100.5px;top:258px;line-height:8.5px;color:#e8e8e8">None</div><div class="sw" style="left:124.8px;top:256.3px;width:13.9px;height:11.6px"><svg width="100%" height="100%" viewBox="0 0 10 10" preserveAspectRatio="none" style="position:absolute;left:0;top:0"><path d="M0,10L10,0" stroke="#e8453c" stroke-width="1" vector-effect="non-scaling-stroke"/></svg></div><div class="hdr" style="top:275.4px"><div class="tri-d" style="left:6.3px;top:3.8px"></div><span>Positioning and Transform</span></div><svg class="abs" style="left:10.2px;top:292.9px" width="12" height="11" viewBox="0 0 12 11"><text x="6" y="7" font-size="6.5" text-anchor="middle" fill="#ddd" font-family="Liberation Sans,sans-serif">VA</text><path d="M2.5,10h7" stroke="#bbb" stroke-width="0.7"/></svg><div class="rf" style="left:23.9px;top:292.6px;width:40.9px;height:11.6px;line-height:10.6px;">Auto</div><div class="abs" style="left:54.3px;top:293.2px;width:9.9px;height:10.4px;background:#424242;border-radius:0 1.5px 1.5px 0"></div><div class="arr" style="left:57.1px;top:296.9px;border-top-color:#e0e0e0"></div><div class="rb" style="left:67.5px;top:292.6px;width:7.4px;height:11.6px;background:#2d2d2d;border:0.6px solid #4a4a4a;border-radius:3px"></div><div class="abs" style="left:69.6px;top:295.2px;width:0;height:0;border-left:1.6px solid transparent;border-right:1.6px solid transparent;border-bottom:2.2px solid #d0d0d0"></div><div class="abs" style="left:69.6px;top:299.2px;width:0;height:0;border-left:1.6px solid transparent;border-right:1.6px solid transparent;border-top:2.2px solid #d0d0d0"></div><svg class="abs" style="left:100.2px;top:292.9px" width="12" height="11" viewBox="0 0 12 11"><text x="6" y="9" font-size="9" font-style="italic" text-anchor="middle" fill="#ddd" font-family="Liberation Serif,serif">T</text></svg><div class="rf" style="left:114.4px;top:292.6px;width:43.1px;height:11.6px;line-height:10.6px;">0 °</div><div class="rb" style="left:158.7px;top:292.6px;width:7.4px;height:11.6px;background:#2d2d2d;border:0.6px solid #4a4a4a;border-radius:3px"></div><div class="abs" style="left:160.8px;top:295.2px;width:0;height:0;border-left:1.6px solid transparent;border-right:1.6px solid transparent;border-bottom:2.2px solid #d0d0d0"></div><div class="abs" style="left:160.8px;top:299.2px;width:0;height:0;border-left:1.6px solid transparent;border-right:1.6px solid transparent;border-top:2.2px solid #d0d0d0"></div><svg class="abs" style="left:10.2px;top:307.3px" width="12" height="11" viewBox="0 0 12 11"><text x="6" y="7" font-size="6.5" text-anchor="middle" fill="#ddd" font-family="Liberation Sans,sans-serif">VA</text><path d="M1.5,9.2h9" stroke="#ddd" stroke-width="0.8"/></svg><div class="rf" style="left:23.9px;top:307.0px;width:40.9px;height:11.6px;line-height:10.6px;">0 ‰</div><div class="abs" style="left:54.3px;top:307.6px;width:9.9px;height:10.4px;background:#424242;border-radius:0 1.5px 1.5px 0"></div><div class="arr" style="left:57.1px;top:311.3px;border-top-color:#e0e0e0"></div><div class="rb" style="left:67.5px;top:307.0px;width:7.4px;height:11.6px;background:#2d2d2d;border:0.6px solid #4a4a4a;border-radius:3px"></div><div class="abs" style="left:69.6px;top:309.6px;width:0;height:0;border-left:1.6px solid transparent;border-right:1.6px solid transparent;border-bottom:2.2px solid #d0d0d0"></div><div class="abs" style="left:69.6px;top:313.6px;width:0;height:0;border-left:1.6px solid transparent;border-right:1.6px solid transparent;border-top:2.2px solid #d0d0d0"></div><svg class="abs" style="left:100.2px;top:307.3px" width="12" height="11" viewBox="0 0 12 11"><text x="6" y="8" font-size="8.5" text-anchor="middle" fill="#ddd" font-family="Liberation Serif,serif">T</text><path d="M2.5,10h7" stroke="#ddd" stroke-width="0.8"/></svg><div class="rf" style="left:114.4px;top:307.0px;width:43.1px;height:11.6px;line-height:10.6px;">100 %</div><div class="rb" style="left:158.7px;top:307.0px;width:7.4px;height:11.6px;background:#2d2d2d;border:0.6px solid #4a4a4a;border-radius:3px"></div><div class="abs" style="left:160.8px;top:309.6px;width:0;height:0;border-left:1.6px solid transparent;border-right:1.6px solid transparent;border-bottom:2.2px solid #d0d0d0"></div><div class="abs" style="left:160.8px;top:313.6px;width:0;height:0;border-left:1.6px solid transparent;border-right:1.6px solid transparent;border-top:2.2px solid #d0d0d0"></div><svg class="abs" style="left:10.2px;top:322.1px" width="12" height="11" viewBox="0 0 12 11"><text x="7.5" y="7" font-size="6.5" text-anchor="middle" fill="#ddd" font-family="Liberation Sans,sans-serif" font-weight="bold">A</text><path d="M2.5,4.5v5M1.3,8l1.2,1.5l1.2,-1.5" stroke="#ccc" stroke-width="0.7" fill="none"/></svg><div class="rf" style="left:23.9px;top:321.8px;width:40.9px;height:11.6px;line-height:10.6px;">0 pt</div><div class="abs" style="left:54.3px;top:322.4px;width:9.9px;height:10.4px;background:#424242;border-radius:0 1.5px 1.5px 0"></div><div class="arr" style="left:57.1px;top:326.1px;border-top-color:#e0e0e0"></div><div class="rb" style="left:67.5px;top:321.8px;width:7.4px;height:11.6px;background:#2d2d2d;border:0.6px solid #4a4a4a;border-radius:3px"></div><div class="abs" style="left:69.6px;top:324.4px;width:0;height:0;border-left:1.6px solid transparent;border-right:1.6px solid transparent;border-bottom:2.2px solid #d0d0d0"></div><div class="abs" style="left:69.6px;top:328.4px;width:0;height:0;border-left:1.6px solid transparent;border-right:1.6px solid transparent;border-top:2.2px solid #d0d0d0"></div><svg class="abs" style="left:100.2px;top:322.1px" width="12" height="11" viewBox="0 0 12 11"><text x="6" y="9" font-size="9" text-anchor="middle" fill="#ddd" font-family="Liberation Serif,serif">IT</text></svg><div class="rf" style="left:114.4px;top:321.8px;width:43.1px;height:11.6px;line-height:10.6px;">100 %</div><div class="rb" style="left:158.7px;top:321.8px;width:7.4px;height:11.6px;background:#2d2d2d;border:0.6px solid #4a4a4a;border-radius:3px"></div><div class="abs" style="left:160.8px;top:324.4px;width:0;height:0;border-left:1.6px solid transparent;border-right:1.6px solid transparent;border-bottom:2.2px solid #d0d0d0"></div><div class="abs" style="left:160.8px;top:328.4px;width:0;height:0;border-left:1.6px solid transparent;border-right:1.6px solid transparent;border-top:2.2px solid #d0d0d0"></div><svg class="abs" style="left:10.2px;top:337.1px" width="12" height="11" viewBox="0 0 12 11"><text x="7.5" y="6.5" font-size="6" text-anchor="middle" fill="#ddd" font-family="Liberation Sans,sans-serif" font-weight="bold">A</text><path d="M2.5,2.5v7.5M1.3,8.5l1.2,1.5l1.2,-1.5M5,8h5M5,10h5" stroke="#ccc" stroke-width="0.7" fill="none"/></svg><div class="rf" style="left:23.9px;top:336.8px;width:40.9px;height:11.6px;line-height:10.6px;">(12.4 pt)</div><div class="abs" style="left:54.3px;top:337.4px;width:9.9px;height:10.4px;background:#424242;border-radius:0 1.5px 1.5px 0"></div><div class="arr" style="left:57.1px;top:341.1px;border-top-color:#e0e0e0"></div><div class="rb" style="left:67.5px;top:336.8px;width:7.4px;height:11.6px;background:#2d2d2d;border:0.6px solid #4a4a4a;border-radius:3px"></div><div class="abs" style="left:69.6px;top:339.4px;width:0;height:0;border-left:1.6px solid transparent;border-right:1.6px solid transparent;border-bottom:2.2px solid #d0d0d0"></div><div class="abs" style="left:69.6px;top:343.4px;width:0;height:0;border-left:1.6px solid transparent;border-right:1.6px solid transparent;border-top:2.2px solid #d0d0d0"></div><svg class="abs" style="left:100.2px;top:337.1px" width="12" height="11" viewBox="0 0 12 11"><text x="5" y="8.5" font-size="8" text-anchor="middle" fill="#ddd" font-family="Liberation Sans,sans-serif">S</text><circle cx="9" cy="5" r="0.6" fill="#ddd"/><circle cx="9" cy="8" r="0.6" fill="#ddd"/></svg><div class="rf" style="left:113.0px;top:336.8px;width:53.0px;height:11.6px;line-height:10.6px;background:#404040">None</div><div class="abs" style="left:160.0px;top:339.4px;width:0;height:0;border-left:1.6px solid transparent;border-right:1.6px solid transparent;border-bottom:2.2px solid #d0d0d0"></div><div class="abs" style="left:160.0px;top:343.4px;width:0;height:0;border-left:1.6px solid transparent;border-right:1.6px solid transparent;border-top:2.2px solid #d0d0d0"></div><div class="abs" style="left:23.5px;top:354.4px;width:8.5px;height:8.5px;background:#303030;border:0.6px solid #4c4c4c;border-radius:1.2px"></div><div class="lbl" style="left:34.8px;top:355px;line-height:8.5px;color:#e4e4e4">No break</div><div class="hdr" style="top:369.6px"><div class="tri-d" style="left:6.3px;top:3.8px"></div><span>Typography</span></div><div class="rb" style="left:9.5px;top:386.3px;width:17.88px;height:12.7px;line-height:12.7px;background:#2a2a2a;border-radius:1.5px 0 0 1.5px;"><span style="display:block;height:12.7px;line-height:12.9px;font-family:'Liberation Serif',serif;font-size:9.5px">fi</span></div><div class="rb" style="left:27.67px;top:386.3px;width:17.57px;height:12.7px;line-height:12.7px;background:#464646;border-radius:0;"><span style="display:block;height:12.7px;line-height:12.9px;font-family:'Liberation Serif',serif;font-style:italic;font-size:9.5px;color:#999">a</span></div><div class="rb" style="left:45.55px;top:386.3px;width:17.57px;height:12.7px;line-height:12.7px;background:#464646;border-radius:0;"><span style="display:block;height:12.7px;line-height:12.9px;font-family:'Liberation Serif',serif;font-weight:bold;font-size:7.5px">1<span style="position:relative;top:-2.2px;font-size:4.5px">st</span></span></div><div class="rb" style="left:63.42px;top:386.3px;width:17.57px;height:12.7px;line-height:12.7px;background:#464646;border-radius:0;"><span style="display:block;height:12.7px;line-height:12.9px;font-size:8px">½</span></div><div class="rb" style="left:81.3px;top:386.3px;width:17.57px;height:12.7px;line-height:12.7px;background:#464646;border-radius:0;"><span style="display:block;height:12.7px;line-height:12.9px;font-weight:bold;font-size:7.5px">S<span style="position:relative;top:-2.2px;font-size:4.5px">•</span></span></div><div class="rb" style="left:99.17px;top:386.3px;width:17.57px;height:12.7px;line-height:12.7px;background:#464646;border-radius:0;"><span style="display:block;height:12.7px;line-height:12.9px;font-weight:bold;font-size:7.5px">S.</span></div><div class="rb" style="left:117.05px;top:386.3px;width:17.57px;height:12.7px;line-height:12.7px;background:#464646;border-radius:0;"><span style="display:block;height:12.7px;line-height:12.9px;font-family:'Liberation Serif',serif;font-weight:bold;font-size:7.5px">TT</span></div><div class="rb" style="left:134.92px;top:386.3px;width:17.57px;height:12.7px;line-height:12.7px;background:#464646;border-radius:0 1.5px 1.5px 0;"><span style="display:block;height:12.7px;line-height:12.9px;font-family:'Liberation Serif',serif;font-weight:bold;font-size:7.5px">T<span style="font-size:5.5px">T</span></span></div><div class="rb" style="left:9.5px;top:403.2px;width:20.43px;height:12.8px;line-height:12.8px;background:#464646;border-radius:1.5px 0 0 1.5px;background:#4a4a4a"><span style="display:block;height:12.7px;line-height:12.9px;font-family:'Liberation Serif',serif;font-size:9.5px;color:#7c7c7c;line-height:11px">gg</span></div><div class="rb" style="left:30.23px;top:403.2px;width:20.13px;height:12.8px;line-height:12.8px;background:#464646;border-radius:0;background:#4a4a4a"><span style="display:block;height:12.7px;line-height:12.9px;font-family:'Liberation Serif',serif;font-size:7.5px;color:#7c7c7c"><span style="border:0.6px solid #7c7c7c;border-top-width:1.2px;padding:0 1px">fi</span></span></div><div class="rb" style="left:50.67px;top:403.2px;width:20.13px;height:12.8px;line-height:12.8px;background:#464646;border-radius:0 1.5px 1.5px 0;background:#4a4a4a"><span style="display:block;height:12.7px;line-height:12.9px;font-family:'Liberation Serif',serif;font-style:italic;font-size:10.5px;color:#7c7c7c">A</span></div><div class="rb" style="left:80.9px;top:404.5px;width:15.8px;height:10.1px;line-height:7px;font-size:7px;color:#ddd;background:#4a4a4a">...</div><div class="abs" style="left:0;top:424.2px;width:172.5px;height:114.1px;background:#2a2a2a"></div><div class="tri-r" style="left:7.3px;top:429.2px"></div><div class="lbl" style="left:16.3px;top:427.3px;font-size:7px;line-height:9px;color:#e0e0e0">Language</div><div class="tri-r" style="left:7.3px;top:443.7px"></div><div class="lbl" style="left:16.3px;top:441.8px;font-size:7px;line-height:9px;color:#e0e0e0">Optical Alignment</div><div class="tabbar tb3" style="left:0;top:538.3px;width:172.5px;height:14.8px"><div class="grip" style="left:5px;top:5px"></div><div class="t on" style="left:13.2px;width:34.8px">Transform</div><div class="t" style="left:51.5px">Navigator</div><div class="t" style="left:83.3px;color:#555">|</div><div class="t" style="left:87.5px">History</div></div><div class="abs" style="left:14.0px;top:568.5px;width:21.5px;height:21px;background:#6e6e6e"></div><div class="abs" style="left:12.5px;top:577.5px;width:3px;height:3px;background:#b4b4b4"></div><div class="abs" style="left:12.5px;top:588.0px;width:3px;height:3px;background:#b4b4b4"></div><div class="abs" style="left:23.3px;top:567.0px;width:3px;height:3px;background:#b4b4b4"></div><div class="abs" style="left:23.3px;top:577.5px;width:3px;height:3px;background:#b4b4b4"></div><div class="abs" style="left:23.3px;top:588.0px;width:3px;height:3px;background:#b4b4b4"></div><div class="abs" style="left:34.0px;top:567.0px;width:3px;height:3px;background:#b4b4b4"></div><div class="abs" style="left:34.0px;top:577.5px;width:3px;height:3px;background:#b4b4b4"></div><div class="abs" style="left:34.0px;top:588.0px;width:3px;height:3px;background:#b4b4b4"></div><div class="abs" style="left:10.7px;top:565.2px;width:6.4px;height:6.4px;background:#fff"></div><div class="lbl" style="left:49.3px;top:561.8px;line-height:9px;color:#e4e4e4">X:</div><div class="rf" style="left:57.5px;top:560.4px;width:38.8px;height:11.9px;line-height:10.9px;padding-left:1.6px">8 mm</div><div class="lbl" style="left:102.1px;top:561.8px;line-height:9px;color:#e4e4e4">W:</div><div class="rf" style="left:111.5px;top:560.4px;width:40.0px;height:11.9px;line-height:10.9px;padding-left:1.6px">194 mm</div><div class="lbl" style="left:49.3px;top:576.2px;line-height:9px;color:#e4e4e4">Y:</div><div class="rf" style="left:57.5px;top:574.9px;width:38.8px;height:11.7px;line-height:10.7px;padding-left:1.6px">192 mm</div><div class="lbl" style="left:103.0px;top:576.2px;line-height:9px;color:#e4e4e4">H:</div><div class="rf" style="left:111.5px;top:574.9px;width:40.0px;height:11.7px;line-height:10.7px;padding-left:1.6px">52.6 mm</div><div class="lbl" style="left:49.3px;top:597.2px;line-height:9px;color:#e4e4e4">R:</div><div class="rf" style="left:57.5px;top:596px;width:38.8px;height:11.4px;line-height:10.4px;padding-left:1.6px">0 °</div><div class="abs" style="left:90.3px;top:600.6px;width:0;height:0;border-left:1.7px solid transparent;border-right:1.7px solid transparent;border-top:2.6px solid #c4c4c4"></div><div class="lbl" style="left:103.5px;top:597.2px;line-height:9px;color:#e4e4e4">S:</div><div class="rf" style="left:111.5px;top:596px;width:40.0px;height:11.4px;line-height:10.4px;padding-left:1.6px">0 °</div><div class="abs" style="left:145.3px;top:600.6px;width:0;height:0;border-left:1.7px solid transparent;border-right:1.7px solid transparent;border-top:2.6px solid #c4c4c4"></div><svg class="abs" style="left:157.0px;top:569px" width="4" height="9" viewBox="0 0 4 9"><rect x="0.8" y="0.5" width="2.4" height="3.4" rx="1.2" fill="none" stroke="#666" stroke-width="0.7"/><rect x="0.8" y="5.1" width="2.4" height="3.4" rx="1.2" fill="none" stroke="#666" stroke-width="0.7"/></svg></div><div id="status"><svg class="abs" style="left:7px;top:3.5px" width="120" height="8" viewBox="7 0 120 8"><g fill="#6a6a6a"><rect x="8" y="1" width="1" height="6"/><path d="M13.5,1v6l-4,-3z"/><path d="M25,1v6l-4,-3z"/></g><g fill="#f0f0f0"><path d="M95.8,0.8v6.4l4.6,-3.2z"/><path d="M107,0.8v6.4l4.4,-3.2z"/><rect x="111.8" y="0.8" width="1.1" height="6.4"/></g><rect x="119.3" y="0.5" width="6" height="7" fill="none" stroke="#666" stroke-width="0.8"/><path d="M120.8,2.5h3M120.8,4.3h3" stroke="#666" stroke-width="0.7"/></svg><div class="abs" style="left:52.3px;top:0.9px;color:#f0f0f0;white-space:nowrap;font-size:7.3px">1 of 2</div><div class="abs" style="left:137.2px;top:0.5px;white-space:nowrap">'|Back stitch all in 1 st' selected. <b>Drag</b> to move selection. <b>Click</b> another object to select it. <b>Click</b> on an empty area to deselect selection.</div></div><div class="abs" style="left:0;top:0;width:1024px;height:1px;background:#5a5a5a"></div></div></body></html>
